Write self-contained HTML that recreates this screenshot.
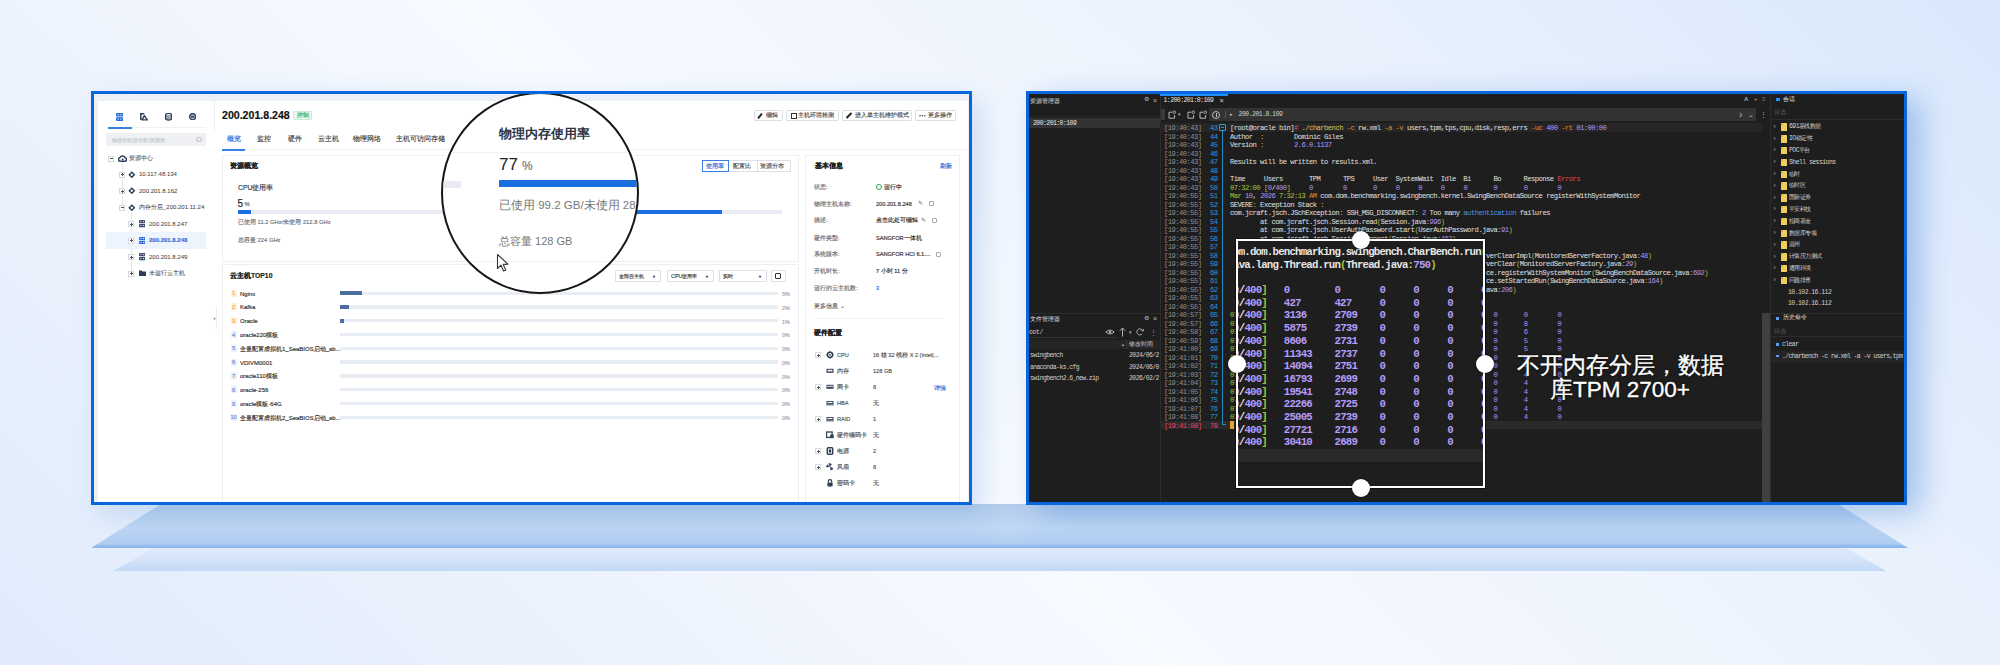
<!DOCTYPE html><html><head><meta charset="utf-8"><style>
*{margin:0;padding:0;box-sizing:border-box}
html,body{width:2000px;height:665px;overflow:hidden}
body{position:relative;font-family:"Liberation Sans",sans-serif;background:linear-gradient(43deg,#e0ebfc 0%,#edf3fd 25%,#f7faff 43%,#eef4fd 66%,#d9e8fc 100%)}
.a{position:absolute}
.t{white-space:nowrap}
.m{font-family:"Liberation Mono",monospace}
.plat1{left:91px;top:504px;width:1817px;height:44px;clip-path:polygon(70px 0,1747px 0,100% 100%,0 100%);background:linear-gradient(180deg,#b4cdec 0%,#c0d8f4 55%,#afcdf2 90%,#8ab7ec 97%,#8ab7ec 100%)}
.plat2{left:113px;top:548px;width:1773px;height:23px;clip-path:polygon(41px 0,1733px 0,100% 100%,0 100%);background:linear-gradient(180deg,#dfeafb 0%,#d2e3f9 55%,#c2d9f6 100%)}
.panel{border:3px solid #0a66dc;overflow:hidden}
#lp{left:91px;top:91px;width:881px;height:414px;background:#eceff3;box-shadow:10px 10px 26px rgba(70,130,210,.22)}
#rp{left:1026px;top:91px;width:881px;height:414px;background:#1e1e1e;box-shadow:14px 8px 28px rgba(60,125,215,.40)}
.org{position:absolute;left:0;top:0;width:2000px;height:665px}
#lp .org{left:-94px;top:-94px}
#rp .org{left:-1029px;top:-94px}
#lp .t{-webkit-text-stroke:0.16px currentColor}
#lp .mag .t{-webkit-text-stroke:0}
.btn{position:absolute;border:1px solid #dcdfe6;background:#fff;border-radius:1px}
</style></head><body>
<div class="a plat2"></div><div class="a plat1"></div>
<div class="a panel" id="lp"><div class="org">
<div class="a" style="left:98px;top:101px;width:870px;height:404px;background:#fff"></div>
<div class="a" style="left:214px;top:101px;width:1px;height:30px;background:#f0f1f3"></div>
<svg class="a" style="left:116.3px;top:113px" width="7.2" height="8" viewBox="0 0 7.2 8"><rect x="0" y="0" width="7.2" height="3.6" rx="1" fill="#2a6fdb"/><rect x="0" y="4.3" width="7.2" height="3.7" rx="1" fill="#2a6fdb"/><rect x="1.6" y="1.3" width="1.2" height="1" fill="#fff"/><rect x="4.4" y="1.3" width="1.2" height="1" fill="#fff"/><rect x="1.6" y="5.6" width="1.2" height="1" fill="#fff"/><rect x="4.4" y="5.6" width="1.2" height="1" fill="#fff"/></svg>
<svg class="a" style="left:140.3px;top:113px" width="8" height="7.6" viewBox="0 0 8 7.6"><path d="M0.8 7 V0.8 H4.3" fill="none" stroke="#2f3d58" stroke-width="1.5"/><path d="M2 6.9 L4.4 2.6 L7.3 6.9 Z" fill="none" stroke="#2f3d58" stroke-width="1.4" stroke-linejoin="round"/></svg>
<svg class="a" style="left:164.8px;top:113px" width="7.2" height="8" viewBox="0 0 7.2 8"><ellipse cx="3.6" cy="2" rx="3" ry="1.6" fill="none" stroke="#2f3d58" stroke-width="1.3"/><path d="M0.6 2 V6 Q3.6 8.2 6.6 6 V2" fill="#9aa6b8" stroke="#2f3d58" stroke-width="1.3"/></svg>
<svg class="a" style="left:189px;top:113px" width="7.4" height="7.4" viewBox="0 0 7.4 7.4"><circle cx="3.7" cy="3.7" r="3.1" fill="#9fb0c6" stroke="#2f3d58" stroke-width="1.3"/><rect x="2" y="3" width="3.4" height="1.4" fill="#2f3d58"/></svg>
<div class="a" style="left:108px;top:127px;width:98px;height:1px;background:#eef0f3"></div>
<div class="a" style="left:108px;top:126.5px;width:23.5px;height:2px;background:#3b7fe0"></div>
<div class="a" style="left:106px;top:132.5px;width:100px;height:13.5px;background:#eef0f4;border-radius:1px"></div>
<div class="a t" style="left:112px;top:137.05px;font-size:5px;line-height:6.50px;color:#c4c8cf;font-weight:400;">物理主机/云主机/资源池</div>
<div class="a" style="left:196px;top:136.5px;width:5.5px;height:5.5px;border:1px solid #b8bcc3;border-radius:50%"></div>
<div class="a" style="left:121.6px;top:162px;width:1px;height:46px;background:#e4e6ea"></div>
<div class="a" style="left:131.3px;top:212px;width:1px;height:62px;background:#e4e6ea"></div>
<div class="a" style="left:108px;top:155.5px;width:6px;height:6px;border:1px solid #d4d7dc;background:#fff"></div>
<div class="a" style="left:109.5px;top:158.0px;width:3px;height:1px;background:#555"></div>
<svg class="a" style="left:117.5px;top:155px" width="9" height="7" viewBox="0 0 9 7"><path d="M2 6.3 H7.2 A1.7 1.7 0 0 0 7.4 3 A3 3 0 0 0 1.8 2.8 A1.8 1.8 0 0 0 2 6.3 Z" fill="none" stroke="#2f3d58" stroke-width="1.5"/><circle cx="4.6" cy="4.4" r="1" fill="#2f3d58"/></svg>
<div class="a t" style="left:129px;top:155.40px;font-size:6px;line-height:7.80px;color:#444;font-weight:400;-webkit-text-stroke:0.05px currentColor">资源中心</div>
<div class="a" style="left:119px;top:171.5px;width:6px;height:6px;border:1px solid #d4d7dc;background:#fff"></div>
<div class="a" style="left:120.5px;top:174.0px;width:3px;height:1px;background:#555"></div>
<div class="a" style="left:121.5px;top:173.0px;width:1px;height:3px;background:#555"></div>
<svg class="a" style="left:128.2px;top:170.70px" width="7.6" height="7.6" viewBox="0 0 7.6 7.6"><path d="M3.8 0.3 L7.3 3.8 L3.8 7.3 L0.3 3.8 Z" fill="#2f3d58"/><path d="M3.8 2.3 L5.3 3.8 L3.8 5.3 L2.3 3.8 Z" fill="#fff"/></svg>
<div class="a t" style="left:139px;top:171.40px;font-size:6px;line-height:7.80px;color:#444;font-weight:400;-webkit-text-stroke:0.05px currentColor">10.117.48.134</div>
<div class="a" style="left:119px;top:188px;width:6px;height:6px;border:1px solid #d4d7dc;background:#fff"></div>
<div class="a" style="left:120.5px;top:190.5px;width:3px;height:1px;background:#555"></div>
<div class="a" style="left:121.5px;top:189.5px;width:1px;height:3px;background:#555"></div>
<svg class="a" style="left:128.2px;top:187.20px" width="7.6" height="7.6" viewBox="0 0 7.6 7.6"><path d="M3.8 0.3 L7.3 3.8 L3.8 7.3 L0.3 3.8 Z" fill="#2f3d58"/><path d="M3.8 2.3 L5.3 3.8 L3.8 5.3 L2.3 3.8 Z" fill="#fff"/></svg>
<div class="a t" style="left:139px;top:187.90px;font-size:6px;line-height:7.80px;color:#444;font-weight:400;-webkit-text-stroke:0.05px currentColor">200.201.8.162</div>
<div class="a" style="left:119px;top:204.5px;width:6px;height:6px;border:1px solid #d4d7dc;background:#fff"></div>
<div class="a" style="left:120.5px;top:207.0px;width:3px;height:1px;background:#555"></div>
<svg class="a" style="left:128.2px;top:203.70px" width="7.6" height="7.6" viewBox="0 0 7.6 7.6"><path d="M3.8 0.3 L7.3 3.8 L3.8 7.3 L0.3 3.8 Z" fill="#2f3d58"/><path d="M3.8 2.3 L5.3 3.8 L3.8 5.3 L2.3 3.8 Z" fill="#fff"/></svg>
<div class="a t" style="left:139px;top:204.40px;font-size:6px;line-height:7.80px;color:#444;font-weight:400;-webkit-text-stroke:0.05px currentColor">内存分层_200.201.11.24</div>
<div class="a" style="left:106px;top:232px;width:100px;height:16.5px;background:#eef4fd"></div>
<div class="a" style="left:128px;top:221px;width:6px;height:6px;border:1px solid #d4d7dc;background:#fff"></div>
<div class="a" style="left:129.5px;top:223.5px;width:3px;height:1px;background:#555"></div>
<div class="a" style="left:130.5px;top:222.5px;width:1px;height:3px;background:#555"></div>
<svg class="a" style="left:138.8px;top:220.40px" width="6.6" height="7.2" viewBox="0 0 6.6 7.2"><rect x="0" y="0" width="6.6" height="3.2" rx="0.8" fill="#3a4a66"/><rect x="0" y="3.9" width="6.6" height="3.3" rx="0.8" fill="#3a4a66"/><rect x="1.4" y="1.1" width="1.1" height="1" fill="#fff"/><rect x="4.1" y="1.1" width="1.1" height="1" fill="#fff"/><rect x="1.4" y="5.1" width="1.1" height="1" fill="#fff"/><rect x="4.1" y="5.1" width="1.1" height="1" fill="#fff"/></svg>
<div class="a t" style="left:149px;top:220.90px;font-size:6px;line-height:7.80px;color:#444;font-weight:400;-webkit-text-stroke:0.05px currentColor">200.201.8.247</div>
<div class="a" style="left:128px;top:237.5px;width:6px;height:6px;border:1px solid #d4d7dc;background:#fff"></div>
<div class="a" style="left:129.5px;top:240.0px;width:3px;height:1px;background:#555"></div>
<div class="a" style="left:130.5px;top:239.0px;width:1px;height:3px;background:#555"></div>
<svg class="a" style="left:138.8px;top:236.90px" width="6.6" height="7.2" viewBox="0 0 6.6 7.2"><rect x="0" y="0" width="6.6" height="3.2" rx="0.8" fill="#2a6fdb"/><rect x="0" y="3.9" width="6.6" height="3.3" rx="0.8" fill="#2a6fdb"/><rect x="1.4" y="1.1" width="1.1" height="1" fill="#fff"/><rect x="4.1" y="1.1" width="1.1" height="1" fill="#fff"/><rect x="1.4" y="5.1" width="1.1" height="1" fill="#fff"/><rect x="4.1" y="5.1" width="1.1" height="1" fill="#fff"/></svg>
<div class="a t" style="left:149px;top:237.40px;font-size:6px;line-height:7.80px;color:#2a6fdb;font-weight:700;">200.201.8.248</div>
<div class="a" style="left:128px;top:254px;width:6px;height:6px;border:1px solid #d4d7dc;background:#fff"></div>
<div class="a" style="left:129.5px;top:256.5px;width:3px;height:1px;background:#555"></div>
<div class="a" style="left:130.5px;top:255.5px;width:1px;height:3px;background:#555"></div>
<svg class="a" style="left:138.8px;top:253.40px" width="6.6" height="7.2" viewBox="0 0 6.6 7.2"><rect x="0" y="0" width="6.6" height="3.2" rx="0.8" fill="#3a4a66"/><rect x="0" y="3.9" width="6.6" height="3.3" rx="0.8" fill="#3a4a66"/><rect x="1.4" y="1.1" width="1.1" height="1" fill="#fff"/><rect x="4.1" y="1.1" width="1.1" height="1" fill="#fff"/><rect x="1.4" y="5.1" width="1.1" height="1" fill="#fff"/><rect x="4.1" y="5.1" width="1.1" height="1" fill="#fff"/></svg>
<div class="a t" style="left:149px;top:253.90px;font-size:6px;line-height:7.80px;color:#444;font-weight:400;-webkit-text-stroke:0.05px currentColor">200.201.8.249</div>
<div class="a" style="left:128px;top:270.5px;width:6px;height:6px;border:1px solid #d4d7dc;background:#fff"></div>
<div class="a" style="left:129.5px;top:273.0px;width:3px;height:1px;background:#555"></div>
<div class="a" style="left:130.5px;top:272.0px;width:1px;height:3px;background:#555"></div>
<svg class="a" style="left:138.8px;top:270px" width="7" height="6.4" viewBox="0 0 7 6.4"><path d="M0 0.6 H2.6 L3.4 1.4 H7 V6.4 H0 Z" fill="#2f3d58"/></svg>
<div class="a t" style="left:149px;top:270.40px;font-size:6px;line-height:7.80px;color:#444;font-weight:400;-webkit-text-stroke:0.05px currentColor">未运行云主机</div>
<div class="a" style="left:212px;top:306px;width:4px;height:24px;background:#fff;border-radius:0 3px 3px 0;box-shadow:1px 0 2px rgba(0,0,0,.08)"></div>
<div class="a t" style="left:213.5px;top:314.90px;font-size:6px;line-height:7.80px;color:#555;font-weight:400;">‹</div>
<div class="a t" style="left:222px;top:109.11px;font-size:10.6px;line-height:13.78px;color:#111;font-weight:700;">200.201.8.248</div>
<div class="a" style="left:293px;top:110.5px;width:19px;height:9px;background:#eaf8ef;border:1px solid #c8ecd6;border-radius:1px"></div>
<div class="a t" style="left:297px;top:112.22px;font-size:5.5px;line-height:7.15px;color:#3aae67;font-weight:400;">控制</div>
<div class="btn" style="left:754px;top:109.5px;width:29px;height:11.5px"></div>
<div class="btn" style="left:786px;top:109.5px;width:53px;height:11.5px"></div>
<div class="btn" style="left:842px;top:109.5px;width:70px;height:11.5px"></div>
<div class="btn" style="left:915px;top:109.5px;width:41px;height:11.5px"></div>
<div class="a t" style="left:766px;top:112.46px;font-size:5.6px;line-height:7.28px;color:#555;font-weight:400;">编辑</div>
<div class="a t" style="left:798px;top:112.46px;font-size:5.6px;line-height:7.28px;color:#555;font-weight:400;">主机环境检测</div>
<div class="a t" style="left:855px;top:112.46px;font-size:5.6px;line-height:7.28px;color:#555;font-weight:400;">进入单主机维护模式</div>
<div class="a t" style="left:928px;top:112.46px;font-size:5.6px;line-height:7.28px;color:#555;font-weight:400;">更多操作</div>
<div class="a" style="left:759px;top:112.5px;width:2px;height:6px;background:#222;transform:rotate(40deg)"></div>
<div class="a" style="left:791px;top:112.5px;width:6px;height:6px;border:1.5px solid #333"></div>
<div class="a" style="left:848px;top:112px;width:2px;height:7px;background:#222;transform:rotate(45deg)"></div>
<div class="a t" style="left:919px;top:111.25px;font-size:7px;line-height:9.10px;color:#333;font-weight:700;">···</div>
<div class="a t" style="left:227px;top:135.18px;font-size:6.8px;line-height:8.84px;color:#2a6fdb;font-weight:400;">概览</div>
<div class="a t" style="left:257px;top:135.18px;font-size:6.8px;line-height:8.84px;color:#444;font-weight:400;">监控</div>
<div class="a t" style="left:288px;top:135.18px;font-size:6.8px;line-height:8.84px;color:#444;font-weight:400;">硬件</div>
<div class="a t" style="left:318px;top:135.18px;font-size:6.8px;line-height:8.84px;color:#444;font-weight:400;">云主机</div>
<div class="a t" style="left:353px;top:135.18px;font-size:6.8px;line-height:8.84px;color:#444;font-weight:400;">物理网络</div>
<div class="a t" style="left:396px;top:135.18px;font-size:6.8px;line-height:8.84px;color:#444;font-weight:400;">主机可访问存储</div>
<div class="a" style="left:222px;top:149px;width:746px;height:1px;background:#f0f1f3"></div>
<div class="a" style="left:222px;top:148.5px;width:23px;height:2px;background:#3b7fe0"></div>
<div class="a" style="left:222px;top:155px;width:577px;height:107px;border:1px solid #eeeff2;background:#fff"></div>
<div class="a t" style="left:230px;top:162.38px;font-size:6.8px;line-height:8.84px;color:#222;font-weight:700;">资源概览</div>
<div class="a t" style="left:238px;top:183.98px;font-size:6.8px;line-height:8.84px;color:#2d3a4f;font-weight:400;">CPU使用率</div>
<div class="a t" style="left:237.5px;top:196.90px;font-size:10px;line-height:13.00px;color:#222;font-weight:400;">5</div>
<div class="a t" style="left:244.5px;top:200.83px;font-size:5.8px;line-height:7.54px;color:#666;font-weight:400;">%</div>
<div class="a" style="left:238px;top:210px;width:223px;height:4px;background:#e8ecf2"></div>
<div class="a" style="left:238px;top:210px;width:13px;height:4px;background:#1a6fe0"></div>
<div class="a t" style="left:238px;top:219.03px;font-size:5.8px;line-height:7.54px;color:#6f747c;font-weight:400;">已使用 11.2 GHz/未使用 212.8 GHz</div>
<div class="a t" style="left:238px;top:237.43px;font-size:5.8px;line-height:7.54px;color:#6f747c;font-weight:400;">总容量 224 GHz</div>
<div class="a" style="left:499px;top:210px;width:283px;height:4px;background:#e8ecf2"></div>
<div class="a" style="left:499px;top:210px;width:223px;height:4px;background:#1a6fe0"></div>
<div class="a" style="left:702px;top:160px;width:88.5px;height:11.5px;border:1px solid #dcdfe6;background:#fff"></div>
<div class="a" style="left:702px;top:160px;width:27px;height:11.5px;border:1px solid #3b7fe0;background:#fff"></div>
<div class="a" style="left:756.5px;top:160px;width:1px;height:11.5px;background:#dcdfe6"></div>
<div class="a t" style="left:706px;top:162.96px;font-size:5.6px;line-height:7.28px;color:#2a6fdb;font-weight:400;">使用率</div>
<div class="a t" style="left:733px;top:162.96px;font-size:5.6px;line-height:7.28px;color:#555;font-weight:400;">配置比</div>
<div class="a t" style="left:760px;top:162.96px;font-size:5.6px;line-height:7.28px;color:#555;font-weight:400;">资源分布</div>
<div class="a" style="left:222px;top:264px;width:577px;height:250px;border:1px solid #eeeff2;background:#fff"></div>
<div class="a t" style="left:230px;top:271.88px;font-size:6.8px;line-height:8.84px;color:#222;font-weight:700;">云主机TOP10</div>
<div class="btn" style="left:615px;top:270px;width:46px;height:12px"></div>
<div class="a t" style="left:619px;top:273.29px;font-size:5.4px;line-height:7.02px;color:#444;font-weight:400;">全部云主机</div>
<div class="a t" style="left:652px;top:274.20px;font-size:4px;line-height:5.20px;color:#333;font-weight:400;">▼</div>
<div class="btn" style="left:667px;top:270px;width:47px;height:12px"></div>
<div class="a t" style="left:671px;top:273.29px;font-size:5.4px;line-height:7.02px;color:#444;font-weight:400;">CPU使用率</div>
<div class="a t" style="left:705px;top:274.20px;font-size:4px;line-height:5.20px;color:#333;font-weight:400;">▼</div>
<div class="btn" style="left:719px;top:270px;width:48px;height:12px"></div>
<div class="a t" style="left:723px;top:273.29px;font-size:5.4px;line-height:7.02px;color:#444;font-weight:400;">实时</div>
<div class="a t" style="left:758px;top:274.20px;font-size:4px;line-height:5.20px;color:#333;font-weight:400;">▼</div>
<div class="btn" style="left:771px;top:270px;width:15px;height:12px"></div>
<div class="a" style="left:775px;top:272.5px;width:6px;height:6px;border:1.3px solid #333;border-radius:1px"></div>
<div class="a" style="left:231px;top:289.7px;width:6px;height:7px;background:#fdf1dc"></div>
<div class="a t" style="left:232px;top:290.36px;font-size:5.6px;line-height:7.28px;color:#f5a623;font-weight:400;">1</div>
<div class="a t" style="left:240px;top:290.70px;font-size:6px;line-height:7.80px;color:#333;font-weight:400;">Nginx</div>
<div class="a" style="left:340px;top:291.5px;width:438px;height:3.4px;background:#e8edf4"></div>
<div class="a" style="left:340px;top:291.4px;width:22px;height:3.6px;background:#4d6f9f"></div>
<div class="a t" style="left:782px;top:290.99px;font-size:5.4px;line-height:7.02px;color:#a0a4ab;font-weight:400;">5%</div>
<div class="a" style="left:231px;top:303.47999999999996px;width:6px;height:7px;background:#fdf1dc"></div>
<div class="a t" style="left:232px;top:304.14px;font-size:5.6px;line-height:7.28px;color:#f5a623;font-weight:400;">2</div>
<div class="a t" style="left:240px;top:304.48px;font-size:6px;line-height:7.80px;color:#333;font-weight:400;">Kafka</div>
<div class="a" style="left:340px;top:305.28px;width:438px;height:3.4px;background:#e8edf4"></div>
<div class="a" style="left:340px;top:305.17999999999995px;width:9px;height:3.6px;background:#4d6f9f"></div>
<div class="a t" style="left:782px;top:304.77px;font-size:5.4px;line-height:7.02px;color:#a0a4ab;font-weight:400;">2%</div>
<div class="a" style="left:231px;top:317.26px;width:6px;height:7px;background:#fdf1dc"></div>
<div class="a t" style="left:232px;top:317.92px;font-size:5.6px;line-height:7.28px;color:#f5a623;font-weight:400;">3</div>
<div class="a t" style="left:240px;top:318.26px;font-size:6px;line-height:7.80px;color:#333;font-weight:400;">Oracle</div>
<div class="a" style="left:340px;top:319.06px;width:438px;height:3.4px;background:#e8edf4"></div>
<div class="a" style="left:340px;top:318.96px;width:4px;height:3.6px;background:#4d6f9f"></div>
<div class="a t" style="left:782px;top:318.55px;font-size:5.4px;line-height:7.02px;color:#a0a4ab;font-weight:400;">1%</div>
<div class="a" style="left:231px;top:331.03999999999996px;width:6px;height:7px;background:#eaf0fa"></div>
<div class="a t" style="left:232px;top:331.70px;font-size:5.6px;line-height:7.28px;color:#6f8fc9;font-weight:400;">4</div>
<div class="a t" style="left:240px;top:332.04px;font-size:6px;line-height:7.80px;color:#333;font-weight:400;">oracle220模板</div>
<div class="a" style="left:340px;top:332.84px;width:438px;height:3.4px;background:#e8edf4"></div>
<div class="a t" style="left:782px;top:332.33px;font-size:5.4px;line-height:7.02px;color:#a0a4ab;font-weight:400;">0%</div>
<div class="a" style="left:231px;top:344.82px;width:6px;height:7px;background:#eaf0fa"></div>
<div class="a t" style="left:232px;top:345.48px;font-size:5.6px;line-height:7.28px;color:#6f8fc9;font-weight:400;">5</div>
<div class="a t" style="left:240px;top:345.82px;font-size:6px;line-height:7.80px;color:#333;font-weight:400;">全量配置虚拟机1_SeaBIOS启动_ab...</div>
<div class="a" style="left:340px;top:346.62px;width:438px;height:3.4px;background:#e8edf4"></div>
<div class="a t" style="left:782px;top:346.11px;font-size:5.4px;line-height:7.02px;color:#a0a4ab;font-weight:400;">0%</div>
<div class="a" style="left:231px;top:358.59999999999997px;width:6px;height:7px;background:#eaf0fa"></div>
<div class="a t" style="left:232px;top:359.26px;font-size:5.6px;line-height:7.28px;color:#6f8fc9;font-weight:400;">6</div>
<div class="a t" style="left:240px;top:359.60px;font-size:6px;line-height:7.80px;color:#333;font-weight:400;">VDIVM0001</div>
<div class="a" style="left:340px;top:360.4px;width:438px;height:3.4px;background:#e8edf4"></div>
<div class="a t" style="left:782px;top:359.89px;font-size:5.4px;line-height:7.02px;color:#a0a4ab;font-weight:400;">0%</div>
<div class="a" style="left:231px;top:372.38px;width:6px;height:7px;background:#eaf0fa"></div>
<div class="a t" style="left:232px;top:373.04px;font-size:5.6px;line-height:7.28px;color:#6f8fc9;font-weight:400;">7</div>
<div class="a t" style="left:240px;top:373.38px;font-size:6px;line-height:7.80px;color:#333;font-weight:400;">oracle110模板</div>
<div class="a" style="left:340px;top:374.18px;width:438px;height:3.4px;background:#e8edf4"></div>
<div class="a t" style="left:782px;top:373.67px;font-size:5.4px;line-height:7.02px;color:#a0a4ab;font-weight:400;">0%</div>
<div class="a" style="left:231px;top:386.15999999999997px;width:6px;height:7px;background:#eaf0fa"></div>
<div class="a t" style="left:232px;top:386.82px;font-size:5.6px;line-height:7.28px;color:#6f8fc9;font-weight:400;">8</div>
<div class="a t" style="left:240px;top:387.16px;font-size:6px;line-height:7.80px;color:#333;font-weight:400;">oracle-256</div>
<div class="a" style="left:340px;top:387.96px;width:438px;height:3.4px;background:#e8edf4"></div>
<div class="a t" style="left:782px;top:387.45px;font-size:5.4px;line-height:7.02px;color:#a0a4ab;font-weight:400;">0%</div>
<div class="a" style="left:231px;top:399.94px;width:6px;height:7px;background:#eaf0fa"></div>
<div class="a t" style="left:232px;top:400.60px;font-size:5.6px;line-height:7.28px;color:#6f8fc9;font-weight:400;">9</div>
<div class="a t" style="left:240px;top:400.94px;font-size:6px;line-height:7.80px;color:#333;font-weight:400;">oracle模板-64G</div>
<div class="a" style="left:340px;top:401.74px;width:438px;height:3.4px;background:#e8edf4"></div>
<div class="a t" style="left:782px;top:401.23px;font-size:5.4px;line-height:7.02px;color:#a0a4ab;font-weight:400;">0%</div>
<div class="a" style="left:231px;top:413.71999999999997px;width:6px;height:7px;background:#eaf0fa"></div>
<div class="a t" style="left:230.5px;top:414.38px;font-size:5.6px;line-height:7.28px;color:#6f8fc9;font-weight:400;">10</div>
<div class="a t" style="left:240px;top:414.72px;font-size:6px;line-height:7.80px;color:#333;font-weight:400;">全量配置虚拟机2_SeaBIOS启动_ab...</div>
<div class="a" style="left:340px;top:415.52px;width:438px;height:3.4px;background:#e8edf4"></div>
<div class="a t" style="left:782px;top:415.01px;font-size:5.4px;line-height:7.02px;color:#a0a4ab;font-weight:400;">0%</div>
<div class="a" style="left:805px;top:155px;width:155px;height:350px;border:1px solid #eeeff2;background:#fff"></div>
<div class="a t" style="left:815px;top:162.38px;font-size:6.8px;line-height:8.84px;color:#222;font-weight:700;">基本信息</div>
<div class="a t" style="left:940px;top:163.03px;font-size:5.8px;line-height:7.54px;color:#2a6fdb;font-weight:400;">刷新</div>
<div class="a t" style="left:814px;top:184.16px;font-size:5.6px;line-height:7.28px;color:#6a6f77;font-weight:400;">状态:</div>
<div class="a" style="left:876px;top:184px;width:6px;height:6px;border:1.5px solid #27b05a;border-radius:50%"></div>
<div class="a t" style="left:884px;top:184.16px;font-size:5.6px;line-height:7.28px;color:#333;font-weight:400;">运行中</div>
<div class="a t" style="left:814px;top:200.66px;font-size:5.6px;line-height:7.28px;color:#6a6f77;font-weight:400;">物理主机名称:</div>
<div class="a t" style="left:876px;top:200.66px;font-size:5.6px;line-height:7.28px;color:#333;font-weight:400;">200.201.8.248</div>
<div class="a t" style="left:814px;top:217.16px;font-size:5.6px;line-height:7.28px;color:#6a6f77;font-weight:400;">描述:</div>
<div class="a t" style="left:876px;top:217.16px;font-size:5.6px;line-height:7.28px;color:#333;font-weight:400;">点击此处可编辑</div>
<div class="a t" style="left:814px;top:235.16px;font-size:5.6px;line-height:7.28px;color:#6a6f77;font-weight:400;">硬件类型:</div>
<div class="a t" style="left:876px;top:235.16px;font-size:5.6px;line-height:7.28px;color:#333;font-weight:400;">SANGFOR一体机</div>
<div class="a t" style="left:814px;top:251.16px;font-size:5.6px;line-height:7.28px;color:#6a6f77;font-weight:400;">系统版本:</div>
<div class="a t" style="left:876px;top:251.16px;font-size:5.6px;line-height:7.28px;color:#333;font-weight:400;">SANGFOR HCI 6.1....</div>
<div class="a t" style="left:814px;top:268.16px;font-size:5.6px;line-height:7.28px;color:#6a6f77;font-weight:400;">开机时长:</div>
<div class="a t" style="left:876px;top:268.16px;font-size:5.6px;line-height:7.28px;color:#333;font-weight:400;">7 小时 11 分</div>
<div class="a t" style="left:814px;top:284.66px;font-size:5.6px;line-height:7.28px;color:#6a6f77;font-weight:400;">运行的云主机数:</div>
<div class="a t" style="left:876px;top:284.66px;font-size:5.6px;line-height:7.28px;color:#2a6fdb;font-weight:400;">3</div>
<div class="a t" style="left:918px;top:200.40px;font-size:6px;line-height:7.80px;color:#aaa;font-weight:400;">✎</div>
<div class="a" style="left:929px;top:201.0px;width:5px;height:5px;border:1px solid #aaa;border-radius:1px"></div>
<div class="a t" style="left:921px;top:216.90px;font-size:6px;line-height:7.80px;color:#aaa;font-weight:400;">✎</div>
<div class="a" style="left:932px;top:217.5px;width:5px;height:5px;border:1px solid #aaa;border-radius:1px"></div>
<div class="a" style="left:936px;top:251.5px;width:5px;height:5px;border:1px solid #aaa;border-radius:1px"></div>
<div class="a t" style="left:814px;top:302.66px;font-size:5.6px;line-height:7.28px;color:#666;font-weight:400;">更多信息 ⌄</div>
<div class="a" style="left:814px;top:318px;width:130px;height:1px;background:#f0f1f3"></div>
<div class="a t" style="left:814px;top:328.88px;font-size:6.8px;line-height:8.84px;color:#222;font-weight:700;">硬件配置</div>
<div class="a" style="left:815px;top:352px;width:6px;height:6px;border:1px solid #d4d7dc;background:#fff"></div>
<div class="a" style="left:816.5px;top:354.5px;width:3px;height:1px;background:#555"></div>
<div class="a" style="left:817.5px;top:353.5px;width:1px;height:3px;background:#555"></div>
<svg class="a" style="left:825.5px;top:351.20px" width="8" height="7.6" viewBox="0 0 8 7.6"><circle cx="4" cy="3.8" r="2.6" fill="none" stroke="#2f3d58" stroke-width="1.5"/><circle cx="4" cy="3.8" r="0.9" fill="#2f3d58"/><path d="M4 0.2V1.2M4 6.4V7.4M0.4 3.8H1.4M6.6 3.8H7.6" stroke="#2f3d58" stroke-width="1.2"/></svg>
<div class="a t" style="left:837px;top:352.16px;font-size:5.6px;line-height:7.28px;color:#555;font-weight:400;">CPU</div>
<div class="a t" style="left:873px;top:352.16px;font-size:5.6px;line-height:7.28px;color:#555;font-weight:400;">16 核 32 线程 X 2  (Intel(...</div>
<svg class="a" style="left:825.5px;top:367.20px" width="8" height="7.6" viewBox="0 0 8 7.6"><rect x="0.5" y="1.8" width="7" height="4" fill="#2f3d58"/><rect x="1.6" y="2.8" width="4.8" height="1.6" fill="#fff"/></svg>
<div class="a t" style="left:837px;top:368.16px;font-size:5.6px;line-height:7.28px;color:#555;font-weight:400;">内存</div>
<div class="a t" style="left:873px;top:368.16px;font-size:5.6px;line-height:7.28px;color:#555;font-weight:400;">128 GB</div>
<div class="a" style="left:815px;top:384px;width:6px;height:6px;border:1px solid #d4d7dc;background:#fff"></div>
<div class="a" style="left:816.5px;top:386.5px;width:3px;height:1px;background:#555"></div>
<div class="a" style="left:817.5px;top:385.5px;width:1px;height:3px;background:#555"></div>
<svg class="a" style="left:825.5px;top:383.20px" width="8" height="7.6" viewBox="0 0 8 7.6"><rect x="0.5" y="1.8" width="7" height="4" fill="#2f3d58"/><rect x="1.5" y="2.7" width="1.4" height="1.4" fill="#fff"/><rect x="3.4" y="2.7" width="1.4" height="1.4" fill="#fff"/><rect x="5.3" y="2.7" width="1.4" height="1.4" fill="#fff"/></svg>
<div class="a t" style="left:837px;top:384.16px;font-size:5.6px;line-height:7.28px;color:#555;font-weight:400;">网卡</div>
<div class="a t" style="left:873px;top:384.16px;font-size:5.6px;line-height:7.28px;color:#555;font-weight:400;">8</div>
<svg class="a" style="left:825.5px;top:399.20px" width="8" height="7.6" viewBox="0 0 8 7.6"><rect x="0.5" y="2" width="7" height="3.6" fill="#2f3d58"/><path d="M1 5.6V6.8M3 5.6V6.8M5 5.6V6.8M7 5.6V6.8" stroke="#2f3d58" stroke-width="0.8"/><rect x="1.5" y="2.9" width="5" height="1.2" fill="#fff"/></svg>
<div class="a t" style="left:837px;top:400.16px;font-size:5.6px;line-height:7.28px;color:#555;font-weight:400;">HBA</div>
<div class="a t" style="left:873px;top:400.16px;font-size:5.6px;line-height:7.28px;color:#555;font-weight:400;">无</div>
<div class="a" style="left:815px;top:416px;width:6px;height:6px;border:1px solid #d4d7dc;background:#fff"></div>
<div class="a" style="left:816.5px;top:418.5px;width:3px;height:1px;background:#555"></div>
<div class="a" style="left:817.5px;top:417.5px;width:1px;height:3px;background:#555"></div>
<svg class="a" style="left:825.5px;top:415.20px" width="8" height="7.6" viewBox="0 0 8 7.6"><rect x="0.5" y="2" width="7" height="3.6" fill="#2f3d58"/><path d="M1 5.6V6.8M3 5.6V6.8M5 5.6V6.8M7 5.6V6.8" stroke="#2f3d58" stroke-width="0.8"/><rect x="1.5" y="2.9" width="5" height="1.2" fill="#fff"/></svg>
<div class="a t" style="left:837px;top:416.16px;font-size:5.6px;line-height:7.28px;color:#555;font-weight:400;">RAID</div>
<div class="a t" style="left:873px;top:416.16px;font-size:5.6px;line-height:7.28px;color:#555;font-weight:400;">1</div>
<svg class="a" style="left:825.5px;top:431.20px" width="8" height="7.6" viewBox="0 0 8 7.6"><rect x="0.5" y="1" width="5.6" height="5.4" fill="none" stroke="#2f3d58" stroke-width="1.3"/><rect x="4.2" y="3.6" width="3.5" height="3.5" fill="#2f3d58"/></svg>
<div class="a t" style="left:837px;top:432.16px;font-size:5.6px;line-height:7.28px;color:#555;font-weight:400;">硬件编码卡</div>
<div class="a t" style="left:873px;top:432.16px;font-size:5.6px;line-height:7.28px;color:#555;font-weight:400;">无</div>
<div class="a" style="left:815px;top:448px;width:6px;height:6px;border:1px solid #d4d7dc;background:#fff"></div>
<div class="a" style="left:816.5px;top:450.5px;width:3px;height:1px;background:#555"></div>
<div class="a" style="left:817.5px;top:449.5px;width:1px;height:3px;background:#555"></div>
<svg class="a" style="left:825.5px;top:447.20px" width="8" height="7.6" viewBox="0 0 8 7.6"><rect x="1.3" y="0.8" width="5.4" height="6.4" rx="0.8" fill="none" stroke="#2f3d58" stroke-width="1.4"/><rect x="2.8" y="2.4" width="2.4" height="3.2" fill="#2f3d58"/></svg>
<div class="a t" style="left:837px;top:448.16px;font-size:5.6px;line-height:7.28px;color:#555;font-weight:400;">电源</div>
<div class="a t" style="left:873px;top:448.16px;font-size:5.6px;line-height:7.28px;color:#555;font-weight:400;">2</div>
<div class="a" style="left:815px;top:464px;width:6px;height:6px;border:1px solid #d4d7dc;background:#fff"></div>
<div class="a" style="left:816.5px;top:466.5px;width:3px;height:1px;background:#555"></div>
<div class="a" style="left:817.5px;top:465.5px;width:1px;height:3px;background:#555"></div>
<svg class="a" style="left:825.5px;top:463.20px" width="8" height="7.6" viewBox="0 0 8 7.6"><path d="M4 3.8 L2.2 0.6 A3 3 0 0 1 5.8 1.2 Z M4 3.8 L7.4 5.2 A3 3 0 0 1 4.6 7.4 Z M4 3.8 L0.6 4.6 A3 3 0 0 1 1.2 1.4 Z" fill="#2f3d58"/></svg>
<div class="a t" style="left:837px;top:464.16px;font-size:5.6px;line-height:7.28px;color:#555;font-weight:400;">风扇</div>
<div class="a t" style="left:873px;top:464.16px;font-size:5.6px;line-height:7.28px;color:#555;font-weight:400;">8</div>
<svg class="a" style="left:825.5px;top:479.20px" width="8" height="7.6" viewBox="0 0 8 7.6"><path d="M2.3 3.4V2.3A1.7 1.7 0 0 1 5.7 2.3V3.4" fill="none" stroke="#2f3d58" stroke-width="1.2"/><rect x="1.4" y="3.4" width="5.2" height="4" rx="0.6" fill="#2f3d58"/></svg>
<div class="a t" style="left:837px;top:480.16px;font-size:5.6px;line-height:7.28px;color:#555;font-weight:400;">密码卡</div>
<div class="a t" style="left:873px;top:480.16px;font-size:5.6px;line-height:7.28px;color:#555;font-weight:400;">无</div>
<div class="a t" style="left:934px;top:385.16px;font-size:5.6px;line-height:7.28px;color:#2a6fdb;font-weight:400;">详情</div>
<div class="a mag" style="left:441.4px;top:91.8px;width:198px;height:202.4px;border-radius:50%;overflow:hidden;background:#fff;border:2px solid #161616">
<div class="a" style="left:-443.4px;top:-93.8px;width:1000px;height:400px">
<div class="a" style="left:430px;top:152px;width:250px;height:1px;background:#f0f1f3"></div>
<div class="a" style="left:430px;top:261px;width:250px;height:1px;background:#f0f1f3"></div>
<div class="a" style="left:440px;top:180.5px;width:21px;height:7.5px;background:#e8ecf2"></div>
<div class="a t" style="left:499px;top:126.17px;font-size:12.5px;line-height:16.25px;color:#2b3547;font-weight:700;">物理内存使用率</div>
<div class="a t" style="left:499px;top:154.25px;font-size:17px;line-height:22.10px;color:#222;font-weight:400;">77</div>
<div class="a t" style="left:522px;top:159.00px;font-size:12px;line-height:15.60px;color:#555;font-weight:400;">%</div>
<div class="a" style="left:499px;top:180px;width:200px;height:7px;background:#1a6fe0"></div>
<div class="a t" style="left:499px;top:197.83px;font-size:11.5px;line-height:14.95px;color:#777;font-weight:400;">已使用 99.2 GB/未使用 28</div>
<div class="a t" style="left:499px;top:234.15px;font-size:11px;line-height:14.30px;color:#777;font-weight:400;">总容量 128 GB</div>
</div></div>
<svg class="a" style="left:496px;top:253px" width="14" height="20" viewBox="0 0 14 20"><path d="M1.5 1.5 L1.5 15.5 L5 12.2 L7.6 18 L9.8 17 L7.2 11.4 L12 11.2 Z" fill="#fff" stroke="#333" stroke-width="1.1" stroke-linejoin="round"/></svg>
</div></div>
<div class="a panel" id="rp"><div class="org">
<div class="a" style="left:1029px;top:94px;width:131px;height:411px;background:#1e1e1e"></div>
<div class="a t" style="left:1030px;top:97.66px;font-size:5.6px;line-height:7.28px;color:#e6e6e6;font-weight:400;">资源管理器</div>
<div class="a t" style="left:1144px;top:96.40px;font-size:6px;line-height:7.80px;color:#bbb;font-weight:400;">⚙</div>
<div class="a t" style="left:1153px;top:95.75px;font-size:7px;line-height:9.10px;color:#bbb;font-weight:400;">×</div>
<div class="a" style="left:1029px;top:116px;width:131px;height:1px;background:#2a2a2a"></div>
<div class="a" style="left:1029px;top:118.2px;width:131px;height:9.5px;background:#333333"></div>
<div class="a t" style="left:1033px;top:119.84px;font-size:6.4px;line-height:8.32px;color:#e6e6e6;font-weight:400;font-family:Liberation Mono,monospace;letter-spacing:-0.51px">200:201:0:109</div>
<div class="a" style="left:1029px;top:312.5px;width:131px;height:1px;background:#2c2c2c"></div>
<div class="a t" style="left:1030px;top:316.10px;font-size:6px;line-height:7.80px;color:#e6e6e6;font-weight:400;">文件管理器</div>
<div class="a t" style="left:1144px;top:315.10px;font-size:6px;line-height:7.80px;color:#bbb;font-weight:400;">⚙</div>
<div class="a t" style="left:1153px;top:314.45px;font-size:7px;line-height:9.10px;color:#bbb;font-weight:400;">×</div>
<div class="a t" style="left:1029px;top:328.64px;font-size:6.4px;line-height:8.32px;color:#cfcfcf;font-weight:400;font-family:Liberation Mono,monospace;letter-spacing:-0.3px">oot/</div>
<div class="a" style="left:1029px;top:336.5px;width:88px;height:1px;background:#333"></div>
<svg class="a" style="left:1105px;top:329px" width="10" height="6" viewBox="0 0 10 6"><path d="M0.8 3 Q5 -1 9.2 3 Q5 7 0.8 3 Z" fill="none" stroke="#b0b0b0" stroke-width="1"/><circle cx="5" cy="3" r="1.3" fill="#b0b0b0"/></svg>
<svg class="a" style="left:1119px;top:327px" width="7" height="10" viewBox="0 0 7 10"><path d="M3.5 9.5 V1 M0.8 3.8 L3.5 1 L6.2 3.8" fill="none" stroke="#b0b0b0" stroke-width="1"/></svg>
<div class="a t" style="left:1128.5px;top:329.25px;font-size:5px;line-height:6.50px;color:#aaa;font-weight:400;">▾</div>
<svg class="a" style="left:1135.5px;top:328px" width="8" height="8" viewBox="0 0 8 8"><path d="M6.8 3.2 A3 3 0 1 0 6 6" fill="none" stroke="#b0b0b0" stroke-width="1"/><path d="M5.2 1.8 L7 3.4 L7.6 1" fill="none" stroke="#b0b0b0" stroke-width="0.9"/></svg>
<div class="a t" style="left:1150px;top:327.95px;font-size:7px;line-height:9.10px;color:#aaa;font-weight:400;">⋮</div>
<div class="a" style="left:1029px;top:340px;width:131px;height:8.7px;background:#262626"></div>
<div class="a t" style="left:1121px;top:341.90px;font-size:4px;line-height:5.20px;color:#aaa;font-weight:400;">▲</div>
<div class="a" style="left:1126px;top:340px;width:1px;height:8.7px;background:#3a3a3a"></div>
<div class="a t" style="left:1129px;top:340.86px;font-size:5.6px;line-height:7.28px;color:#cfcfcf;font-weight:400;">修改时间</div>
<div class="a t" style="left:1030px;top:352.14px;font-size:6.4px;line-height:8.32px;color:#d0d0d0;font-weight:400;font-family:Liberation Mono,monospace;letter-spacing:-0.57px">swingbench</div>
<div class="a t" style="left:1129px;top:352.14px;font-size:6.4px;line-height:8.32px;color:#d0d0d0;font-weight:400;font-family:Liberation Mono,monospace;letter-spacing:-0.51px">2024/06/2</div>
<div class="a t" style="left:1030px;top:363.64px;font-size:6.4px;line-height:8.32px;color:#d0d0d0;font-weight:400;font-family:Liberation Mono,monospace;letter-spacing:-0.57px">anaconda-ks.cfg</div>
<div class="a t" style="left:1129px;top:363.64px;font-size:6.4px;line-height:8.32px;color:#d0d0d0;font-weight:400;font-family:Liberation Mono,monospace;letter-spacing:-0.51px">2024/06/0</div>
<div class="a t" style="left:1030px;top:374.94px;font-size:6.4px;line-height:8.32px;color:#d0d0d0;font-weight:400;font-family:Liberation Mono,monospace;letter-spacing:-0.57px">swingbench2.6_new.zip</div>
<div class="a t" style="left:1129px;top:374.94px;font-size:6.4px;line-height:8.32px;color:#d0d0d0;font-weight:400;font-family:Liberation Mono,monospace;letter-spacing:-0.51px">2026/02/2</div>
<div class="a" style="left:1159.5px;top:94px;width:1.5px;height:411px;background:#2d2d2d"></div>
<div class="a" style="left:1769.5px;top:94px;width:1.5px;height:411px;background:#2d2d2d"></div>
<div class="a" style="left:1160px;top:94px;width:68px;height:1.5px;background:#1e8fff"></div>
<div class="a t" style="left:1163.5px;top:97.14px;font-size:6.4px;line-height:8.32px;color:#e8e8e8;font-weight:400;font-family:Liberation Mono,monospace;letter-spacing:-0.51px">1:200:201:0:109</div>
<div class="a t" style="left:1219.5px;top:95.72px;font-size:7.5px;line-height:9.75px;color:#ddd;font-weight:400;">×</div>
<div class="a t" style="left:1744px;top:96.40px;font-size:6px;line-height:7.80px;color:#aaa;font-weight:700;">A</div>
<div class="a t" style="left:1754px;top:96.40px;font-size:6px;line-height:7.80px;color:#aaa;font-weight:400;">+</div>
<div class="a t" style="left:1762px;top:96.40px;font-size:6px;line-height:7.80px;color:#888;font-weight:400;">≡</div>
<div class="a" style="left:1161px;top:109px;width:4px;height:11px;background:#3a3a3a"></div>
<svg class="a" style="left:1168px;top:110px" width="8" height="9" viewBox="0 0 8 9"><path d="M4.2 2.2 H1 V8.2 H6.6 V5" fill="none" stroke="#b8b8b8" stroke-width="1"/><circle cx="6.3" cy="2.2" r="1.3" fill="none" stroke="#b8b8b8" stroke-width="0.9"/></svg>
<svg class="a" style="left:1187px;top:110px" width="8" height="9" viewBox="0 0 8 9"><path d="M4.2 2.2 H1 V8.2 H6.6 V5" fill="none" stroke="#b8b8b8" stroke-width="1"/><circle cx="6.3" cy="2.2" r="1.3" fill="none" stroke="#b8b8b8" stroke-width="0.9"/></svg>
<svg class="a" style="left:1199px;top:110px" width="8" height="9" viewBox="0 0 8 9"><path d="M4.2 2.2 H1 V8.2 H6.6 V5" fill="none" stroke="#b8b8b8" stroke-width="1"/><circle cx="6.3" cy="2.2" r="1.3" fill="none" stroke="#b8b8b8" stroke-width="0.9"/></svg>
<div class="a t" style="left:1178px;top:111.25px;font-size:5px;line-height:6.50px;color:#aaa;font-weight:400;">▾</div>
<div class="a" style="left:1209px;top:108px;width:547px;height:12.5px;background:#333"></div>
<div class="a" style="left:1212px;top:110.5px;width:8px;height:8px;border:1px solid #bbb;border-radius:50%"></div>
<div class="a" style="left:1215.5px;top:112.5px;width:1px;height:4px;background:#bbb"></div>
<div class="a" style="left:1224.5px;top:111px;width:0.8px;height:7px;background:#555"></div>
<div class="a t" style="left:1230px;top:111.25px;font-size:5px;line-height:6.50px;color:#ccc;font-weight:400;">▸</div>
<div class="a t" style="left:1238.5px;top:111.14px;font-size:6.4px;line-height:8.32px;color:#d0d0d0;font-weight:400;font-family:Liberation Mono,monospace;letter-spacing:-0.45px">200.201.8.109</div>
<div class="a t" style="left:1739px;top:108.00px;font-size:10px;line-height:13.00px;color:#bbb;font-weight:400;">›</div>
<div class="a t" style="left:1748px;top:109.65px;font-size:7px;line-height:9.10px;color:#bbb;font-weight:400;">⌄</div>
<div class="a t" style="left:1760px;top:109.95px;font-size:7px;line-height:9.10px;color:#bbb;font-weight:400;">⋮</div>
<div class="a" style="left:1761.5px;top:313px;width:8px;height:192px;background:#404040"></div>
<div class="a" style="left:1776px;top:97.5px;width:3.5px;height:3.5px;background:#1e8fff"></div>
<div class="a t" style="left:1783px;top:95.70px;font-size:6px;line-height:7.80px;color:#e6e6e6;font-weight:400;">会话</div>
<div class="a t" style="left:1774px;top:109.42px;font-size:5.5px;line-height:7.15px;color:#555;font-weight:400;">筛选</div>
<div class="a" style="left:1771px;top:118.5px;width:133px;height:1px;background:#2c2c2c"></div>
<div class="a t" style="left:1773.5px;top:122.88px;font-size:6.5px;line-height:8.45px;color:#aaa;font-weight:400;">›</div>
<div class="a" style="left:1780.5px;top:123.3px;width:6px;height:7.6px;background:#efcf5c;border-radius:0.5px"></div>
<div class="a" style="left:1780.5px;top:123.3px;width:2.5px;height:2px;background:#d8b040"></div>
<div class="a t" style="left:1789px;top:123.44px;font-size:6.4px;line-height:8.32px;color:#d8d8d8;font-weight:400;font-family:Liberation Mono,monospace;letter-spacing:-0.51px">691基线数据</div>
<div class="a t" style="left:1773.5px;top:134.68px;font-size:6.5px;line-height:8.45px;color:#aaa;font-weight:400;">›</div>
<div class="a" style="left:1780.5px;top:135.1px;width:6px;height:7.6px;background:#efcf5c;border-radius:0.5px"></div>
<div class="a" style="left:1780.5px;top:135.1px;width:2.5px;height:2px;background:#d8b040"></div>
<div class="a t" style="left:1789px;top:135.24px;font-size:6.4px;line-height:8.32px;color:#d8d8d8;font-weight:400;font-family:Liberation Mono,monospace;letter-spacing:-0.51px">IO稳定性</div>
<div class="a t" style="left:1773.5px;top:146.47px;font-size:6.5px;line-height:8.45px;color:#aaa;font-weight:400;">›</div>
<div class="a" style="left:1780.5px;top:146.89999999999998px;width:6px;height:7.6px;background:#efcf5c;border-radius:0.5px"></div>
<div class="a" style="left:1780.5px;top:146.89999999999998px;width:2.5px;height:2px;background:#d8b040"></div>
<div class="a t" style="left:1789px;top:147.04px;font-size:6.4px;line-height:8.32px;color:#d8d8d8;font-weight:400;font-family:Liberation Mono,monospace;letter-spacing:-0.51px">POC平台</div>
<div class="a t" style="left:1773.5px;top:158.28px;font-size:6.5px;line-height:8.45px;color:#aaa;font-weight:400;">›</div>
<div class="a" style="left:1780.5px;top:158.7px;width:6px;height:7.6px;background:#efcf5c;border-radius:0.5px"></div>
<div class="a" style="left:1780.5px;top:158.7px;width:2.5px;height:2px;background:#d8b040"></div>
<div class="a t" style="left:1789px;top:158.84px;font-size:6.4px;line-height:8.32px;color:#d8d8d8;font-weight:400;font-family:Liberation Mono,monospace;letter-spacing:-0.51px">Shell sessions</div>
<div class="a t" style="left:1773.5px;top:170.08px;font-size:6.5px;line-height:8.45px;color:#aaa;font-weight:400;">›</div>
<div class="a" style="left:1780.5px;top:170.5px;width:6px;height:7.6px;background:#efcf5c;border-radius:0.5px"></div>
<div class="a" style="left:1780.5px;top:170.5px;width:2.5px;height:2px;background:#d8b040"></div>
<div class="a t" style="left:1789px;top:170.64px;font-size:6.4px;line-height:8.32px;color:#d8d8d8;font-weight:400;font-family:Liberation Mono,monospace;letter-spacing:-0.51px">临时</div>
<div class="a t" style="left:1773.5px;top:181.88px;font-size:6.5px;line-height:8.45px;color:#aaa;font-weight:400;">›</div>
<div class="a" style="left:1780.5px;top:182.29999999999998px;width:6px;height:7.6px;background:#efcf5c;border-radius:0.5px"></div>
<div class="a" style="left:1780.5px;top:182.29999999999998px;width:2.5px;height:2px;background:#d8b040"></div>
<div class="a t" style="left:1789px;top:182.44px;font-size:6.4px;line-height:8.32px;color:#d8d8d8;font-weight:400;font-family:Liberation Mono,monospace;letter-spacing:-0.51px">临时区</div>
<div class="a t" style="left:1773.5px;top:193.68px;font-size:6.5px;line-height:8.45px;color:#aaa;font-weight:400;">›</div>
<div class="a" style="left:1780.5px;top:194.1px;width:6px;height:7.6px;background:#efcf5c;border-radius:0.5px"></div>
<div class="a" style="left:1780.5px;top:194.1px;width:2.5px;height:2px;background:#d8b040"></div>
<div class="a t" style="left:1789px;top:194.24px;font-size:6.4px;line-height:8.32px;color:#d8d8d8;font-weight:400;font-family:Liberation Mono,monospace;letter-spacing:-0.51px">国新证券</div>
<div class="a t" style="left:1773.5px;top:205.47px;font-size:6.5px;line-height:8.45px;color:#aaa;font-weight:400;">›</div>
<div class="a" style="left:1780.5px;top:205.89999999999998px;width:6px;height:7.6px;background:#efcf5c;border-radius:0.5px"></div>
<div class="a" style="left:1780.5px;top:205.89999999999998px;width:2.5px;height:2px;background:#d8b040"></div>
<div class="a t" style="left:1789px;top:206.04px;font-size:6.4px;line-height:8.32px;color:#d8d8d8;font-weight:400;font-family:Liberation Mono,monospace;letter-spacing:-0.51px">平安科技</div>
<div class="a t" style="left:1773.5px;top:217.28px;font-size:6.5px;line-height:8.45px;color:#aaa;font-weight:400;">›</div>
<div class="a" style="left:1780.5px;top:217.7px;width:6px;height:7.6px;background:#efcf5c;border-radius:0.5px"></div>
<div class="a" style="left:1780.5px;top:217.7px;width:2.5px;height:2px;background:#d8b040"></div>
<div class="a t" style="left:1789px;top:217.84px;font-size:6.4px;line-height:8.32px;color:#d8d8d8;font-weight:400;font-family:Liberation Mono,monospace;letter-spacing:-0.51px">招商基金</div>
<div class="a t" style="left:1773.5px;top:229.08px;font-size:6.5px;line-height:8.45px;color:#aaa;font-weight:400;">›</div>
<div class="a" style="left:1780.5px;top:229.5px;width:6px;height:7.6px;background:#efcf5c;border-radius:0.5px"></div>
<div class="a" style="left:1780.5px;top:229.5px;width:2.5px;height:2px;background:#d8b040"></div>
<div class="a t" style="left:1789px;top:229.64px;font-size:6.4px;line-height:8.32px;color:#d8d8d8;font-weight:400;font-family:Liberation Mono,monospace;letter-spacing:-0.51px">数据库专项</div>
<div class="a t" style="left:1773.5px;top:240.88px;font-size:6.5px;line-height:8.45px;color:#aaa;font-weight:400;">›</div>
<div class="a" style="left:1780.5px;top:241.29999999999998px;width:6px;height:7.6px;background:#efcf5c;border-radius:0.5px"></div>
<div class="a" style="left:1780.5px;top:241.29999999999998px;width:2.5px;height:2px;background:#d8b040"></div>
<div class="a t" style="left:1789px;top:241.44px;font-size:6.4px;line-height:8.32px;color:#d8d8d8;font-weight:400;font-family:Liberation Mono,monospace;letter-spacing:-0.51px">温州</div>
<div class="a t" style="left:1773.5px;top:252.67px;font-size:6.5px;line-height:8.45px;color:#aaa;font-weight:400;">›</div>
<div class="a" style="left:1780.5px;top:253.09999999999997px;width:6px;height:7.6px;background:#efcf5c;border-radius:0.5px"></div>
<div class="a" style="left:1780.5px;top:253.09999999999997px;width:2.5px;height:2px;background:#d8b040"></div>
<div class="a t" style="left:1789px;top:253.24px;font-size:6.4px;line-height:8.32px;color:#d8d8d8;font-weight:400;font-family:Liberation Mono,monospace;letter-spacing:-0.51px">计算压力测试</div>
<div class="a t" style="left:1773.5px;top:264.48px;font-size:6.5px;line-height:8.45px;color:#aaa;font-weight:400;">›</div>
<div class="a" style="left:1780.5px;top:264.90000000000003px;width:6px;height:7.6px;background:#efcf5c;border-radius:0.5px"></div>
<div class="a" style="left:1780.5px;top:264.90000000000003px;width:2.5px;height:2px;background:#d8b040"></div>
<div class="a t" style="left:1789px;top:265.04px;font-size:6.4px;line-height:8.32px;color:#d8d8d8;font-weight:400;font-family:Liberation Mono,monospace;letter-spacing:-0.51px">通用环境</div>
<div class="a t" style="left:1773.5px;top:276.27px;font-size:6.5px;line-height:8.45px;color:#aaa;font-weight:400;">›</div>
<div class="a" style="left:1780.5px;top:276.7px;width:6px;height:7.6px;background:#efcf5c;border-radius:0.5px"></div>
<div class="a" style="left:1780.5px;top:276.7px;width:2.5px;height:2px;background:#d8b040"></div>
<div class="a t" style="left:1789px;top:276.84px;font-size:6.4px;line-height:8.32px;color:#d8d8d8;font-weight:400;font-family:Liberation Mono,monospace;letter-spacing:-0.51px">问题排查</div>
<div class="a t" style="left:1788px;top:288.64px;font-size:6.4px;line-height:8.32px;color:#d0d0d0;font-weight:400;font-family:Liberation Mono,monospace;letter-spacing:-0.51px">10.102.16.112</div>
<div class="a t" style="left:1788px;top:300.44px;font-size:6.4px;line-height:8.32px;color:#d0d0d0;font-weight:400;font-family:Liberation Mono,monospace;letter-spacing:-0.51px">10.102.16.112</div>
<div class="a" style="left:1771px;top:312.5px;width:133px;height:1px;background:#2c2c2c"></div>
<div class="a" style="left:1776px;top:316.5px;width:3px;height:3px;background:#5aa0f0"></div>
<div class="a t" style="left:1783px;top:314.10px;font-size:6px;line-height:7.80px;color:#e6e6e6;font-weight:400;">历史命令</div>
<div class="a t" style="left:1774px;top:327.62px;font-size:5.5px;line-height:7.15px;color:#555;font-weight:400;">筛选</div>
<div class="a" style="left:1771px;top:336px;width:133px;height:1px;background:#2c2c2c"></div>
<div class="a" style="left:1776px;top:343px;width:2.5px;height:2.5px;background:#5aa0f0"></div>
<div class="a t" style="left:1782px;top:341.14px;font-size:6.4px;line-height:8.32px;color:#d0d0d0;font-weight:400;font-family:Liberation Mono,monospace;letter-spacing:-0.55px">clear</div>
<div class="a" style="left:1771px;top:350.5px;width:133px;height:11.5px;background:#252525"></div>
<div class="a" style="left:1776px;top:354.8px;width:2.5px;height:2.5px;background:#5aa0f0"></div>
<div class="a t" style="left:1782px;top:352.84px;font-size:6.4px;line-height:8.32px;color:#d0d0d0;font-weight:400;font-family:Liberation Mono,monospace;letter-spacing:-0.58px">./charbench -c rw.xml -a -v users,tpm</div>
<div class="a" style="left:1160px;top:122.8px;width:602px;height:9px;background:#262626"></div>
<div class="a" style="left:1160px;top:420.8px;width:602px;height:8px;background:#2a2a2a"></div>
<div class="a t m" style="left:1164px;top:124.15px;font-size:7.2px;letter-spacing:-0.550px;line-height:8.5px;"><span style="color:#8e8e8e">[19:40:43]</span></div>
<div class="a t m" style="left:1210px;top:124.15px;font-size:7.2px;letter-spacing:-0.550px;line-height:8.5px;"><span style="color:#2e9bd6">43</span></div>
<div class="a t m" style="left:1230.0px;top:124.15px;font-size:7.2px;letter-spacing:-0.550px;line-height:8.5px;"><span style="color:#e0e0e0">[root@oracle&#160;bin]</span><span style="color:#f03e6a">#</span><span style="color:#d9c15a">&#160;./charbench&#160;</span><span style="color:#e38b2c">-c</span><span style="color:#e0e0e0">&#160;rw.xml&#160;</span><span style="color:#e38b2c">-a</span><span style="color:#e0e0e0">&#160;</span><span style="color:#e38b2c">-v</span><span style="color:#e0e0e0">&#160;users,tpm,tps,cpu,disk,resp,errs&#160;</span><span style="color:#e38b2c">-uc</span><span style="color:#e0e0e0">&#160;</span><span style="color:#b096f5">400</span><span style="color:#e0e0e0">&#160;</span><span style="color:#e38b2c">-rt</span><span style="color:#e0e0e0">&#160;</span><span style="color:#b096f5">01:00:00</span></div>
<div class="a t m" style="left:1164px;top:132.65px;font-size:7.2px;letter-spacing:-0.550px;line-height:8.5px;"><span style="color:#8e8e8e">[19:40:43]</span></div>
<div class="a t m" style="left:1210px;top:132.65px;font-size:7.2px;letter-spacing:-0.550px;line-height:8.5px;"><span style="color:#2e9bd6">44</span></div>
<div class="a t m" style="left:1230.0px;top:132.65px;font-size:7.2px;letter-spacing:-0.550px;line-height:8.5px;"><span style="color:#e0e0e0">Author&#160;&#160;</span><span style="color:#d9c15a">:</span><span style="color:#e0e0e0">&#160;&#160;&#160;&#160;&#160;&#160;&#160;&#160;</span><span style="color:#e0e0e0">Dominic&#160;Giles</span></div>
<div class="a t m" style="left:1164px;top:141.15px;font-size:7.2px;letter-spacing:-0.550px;line-height:8.5px;"><span style="color:#8e8e8e">[19:40:43]</span></div>
<div class="a t m" style="left:1210px;top:141.15px;font-size:7.2px;letter-spacing:-0.550px;line-height:8.5px;"><span style="color:#2e9bd6">45</span></div>
<div class="a t m" style="left:1230.0px;top:141.15px;font-size:7.2px;letter-spacing:-0.550px;line-height:8.5px;"><span style="color:#e0e0e0">Version&#160;</span><span style="color:#d9c15a">:</span><span style="color:#e0e0e0">&#160;&#160;&#160;&#160;&#160;&#160;&#160;&#160;</span><span style="color:#b096f5">2.6.0.1137</span></div>
<div class="a t m" style="left:1164px;top:149.65px;font-size:7.2px;letter-spacing:-0.550px;line-height:8.5px;"><span style="color:#8e8e8e">[19:40:43]</span></div>
<div class="a t m" style="left:1210px;top:149.65px;font-size:7.2px;letter-spacing:-0.550px;line-height:8.5px;"><span style="color:#2e9bd6">46</span></div>
<div class="a t m" style="left:1164px;top:158.15px;font-size:7.2px;letter-spacing:-0.550px;line-height:8.5px;"><span style="color:#8e8e8e">[19:40:43]</span></div>
<div class="a t m" style="left:1210px;top:158.15px;font-size:7.2px;letter-spacing:-0.550px;line-height:8.5px;"><span style="color:#2e9bd6">47</span></div>
<div class="a t m" style="left:1230.0px;top:158.15px;font-size:7.2px;letter-spacing:-0.550px;line-height:8.5px;"><span style="color:#e0e0e0">Results&#160;will&#160;be&#160;written&#160;to&#160;results.xml.</span></div>
<div class="a t m" style="left:1164px;top:166.65px;font-size:7.2px;letter-spacing:-0.550px;line-height:8.5px;"><span style="color:#8e8e8e">[19:40:43]</span></div>
<div class="a t m" style="left:1210px;top:166.65px;font-size:7.2px;letter-spacing:-0.550px;line-height:8.5px;"><span style="color:#2e9bd6">48</span></div>
<div class="a t m" style="left:1164px;top:175.15px;font-size:7.2px;letter-spacing:-0.550px;line-height:8.5px;"><span style="color:#8e8e8e">[19:40:43]</span></div>
<div class="a t m" style="left:1210px;top:175.15px;font-size:7.2px;letter-spacing:-0.550px;line-height:8.5px;"><span style="color:#2e9bd6">49</span></div>
<div class="a t m" style="left:1230.0px;top:175.15px;font-size:7.2px;letter-spacing:-0.550px;line-height:8.5px;"><span style="color:#e0e0e0">Time&#160;&#160;&#160;&#160;&#160;Users&#160;&#160;&#160;&#160;&#160;&#160;&#160;TPM&#160;&#160;&#160;&#160;&#160;&#160;TPS&#160;&#160;&#160;&#160;&#160;User&#160;&#160;SystemWait&#160;&#160;Idle&#160;&#160;Bi&#160;&#160;&#160;&#160;&#160;&#160;Bo&#160;&#160;&#160;&#160;&#160;&#160;Response&#160;</span><span style="color:#e5484d">Errors</span></div>
<div class="a t m" style="left:1164px;top:183.65px;font-size:7.2px;letter-spacing:-0.550px;line-height:8.5px;"><span style="color:#8e8e8e">[19:40:43]</span></div>
<div class="a t m" style="left:1210px;top:183.65px;font-size:7.2px;letter-spacing:-0.550px;line-height:8.5px;"><span style="color:#2e9bd6">50</span></div>
<div class="a t m" style="left:1230.0px;top:183.65px;font-size:7.2px;letter-spacing:-0.550px;line-height:8.5px;"><span style="color:#a4c43a">07:32:00</span><span style="color:#e0e0e0">&#160;</span><span style="color:#a4c43a">[</span><span style="color:#b096f5">0</span><span style="color:#e0e0e0">/</span><span style="color:#b096f5">400</span><span style="color:#a4c43a">]</span><span style="color:#e0e0e0">&#160;&#160;&#160;&#160;&#160;</span><span style="color:#b096f5">0</span><span style="color:#e0e0e0">&#160;&#160;&#160;&#160;&#160;&#160;&#160;&#160;</span><span style="color:#b096f5">0</span><span style="color:#e0e0e0">&#160;&#160;&#160;&#160;&#160;&#160;&#160;</span><span style="color:#b096f5">0</span><span style="color:#e0e0e0">&#160;&#160;&#160;&#160;&#160;</span><span style="color:#b096f5">0</span><span style="color:#e0e0e0">&#160;&#160;&#160;&#160;&#160;</span><span style="color:#b096f5">0</span><span style="color:#e0e0e0">&#160;&#160;&#160;&#160;&#160;</span><span style="color:#b096f5">0</span><span style="color:#e0e0e0">&#160;&#160;&#160;&#160;&#160;</span><span style="color:#b096f5">0</span><span style="color:#e0e0e0">&#160;&#160;&#160;&#160;&#160;&#160;&#160;</span><span style="color:#b096f5">0</span><span style="color:#e0e0e0">&#160;&#160;&#160;&#160;&#160;&#160;&#160;</span><span style="color:#b096f5">0</span><span style="color:#e0e0e0">&#160;&#160;&#160;&#160;&#160;&#160;&#160;&#160;</span><span style="color:#b096f5">0</span></div>
<div class="a t m" style="left:1164px;top:192.15px;font-size:7.2px;letter-spacing:-0.550px;line-height:8.5px;"><span style="color:#8e8e8e">[19:40:55]</span></div>
<div class="a t m" style="left:1210px;top:192.15px;font-size:7.2px;letter-spacing:-0.550px;line-height:8.5px;"><span style="color:#2e9bd6">51</span></div>
<div class="a t m" style="left:1230.0px;top:192.15px;font-size:7.2px;letter-spacing:-0.550px;line-height:8.5px;"><span style="color:#a4c43a">Mar</span><span style="color:#e0e0e0">&#160;</span><span style="color:#b096f5">10</span><span style="color:#e0e0e0">,&#160;</span><span style="color:#b096f5">2026</span><span style="color:#e0e0e0">&#160;</span><span style="color:#a4c43a">7:32:13</span><span style="color:#e0e0e0">&#160;</span><span style="color:#e38b2c">AM</span><span style="color:#e0e0e0">&#160;com.dom.benchmarking.swingbench.kernel.SwingBenchDataSource&#160;registerWithSystemMonitor</span></div>
<div class="a t m" style="left:1164px;top:200.65px;font-size:7.2px;letter-spacing:-0.550px;line-height:8.5px;"><span style="color:#8e8e8e">[19:40:55]</span></div>
<div class="a t m" style="left:1210px;top:200.65px;font-size:7.2px;letter-spacing:-0.550px;line-height:8.5px;"><span style="color:#2e9bd6">52</span></div>
<div class="a t m" style="left:1230.0px;top:200.65px;font-size:7.2px;letter-spacing:-0.550px;line-height:8.5px;"><span style="color:#e0e0e0">SEVERE</span><span style="color:#d9c15a">:</span><span style="color:#e0e0e0">&#160;Exception&#160;Stack&#160;</span><span style="color:#d9c15a">:</span></div>
<div class="a t m" style="left:1164px;top:209.15px;font-size:7.2px;letter-spacing:-0.550px;line-height:8.5px;"><span style="color:#8e8e8e">[19:40:55]</span></div>
<div class="a t m" style="left:1210px;top:209.15px;font-size:7.2px;letter-spacing:-0.550px;line-height:8.5px;"><span style="color:#2e9bd6">53</span></div>
<div class="a t m" style="left:1230.0px;top:209.15px;font-size:7.2px;letter-spacing:-0.550px;line-height:8.5px;"><span style="color:#e0e0e0">com.jcraft.jsch.JSchException</span><span style="color:#d9c15a">:</span><span style="color:#e0e0e0">&#160;SSH_MSG_DISCONNECT</span><span style="color:#d9c15a">:</span><span style="color:#e0e0e0">&#160;</span><span style="color:#b096f5">2</span><span style="color:#e0e0e0">&#160;Too&#160;many&#160;</span><span style="color:#4a8ef0">authentication</span><span style="color:#e0e0e0">&#160;failures</span></div>
<div class="a t m" style="left:1164px;top:217.65px;font-size:7.2px;letter-spacing:-0.550px;line-height:8.5px;"><span style="color:#8e8e8e">[19:40:55]</span></div>
<div class="a t m" style="left:1210px;top:217.65px;font-size:7.2px;letter-spacing:-0.550px;line-height:8.5px;"><span style="color:#2e9bd6">54</span></div>
<div class="a t m" style="left:1230.0px;top:217.65px;font-size:7.2px;letter-spacing:-0.550px;line-height:8.5px;"><span style="color:#e0e0e0">&#160;&#160;&#160;&#160;&#160;&#160;&#160;&#160;at&#160;com.jcraft.jsch.Session.read</span><span style="color:#a4c43a">(</span><span style="color:#e0e0e0">Session.java</span><span style="color:#d9c15a">:</span><span style="color:#b096f5">996</span><span style="color:#a4c43a">)</span></div>
<div class="a t m" style="left:1164px;top:226.15px;font-size:7.2px;letter-spacing:-0.550px;line-height:8.5px;"><span style="color:#8e8e8e">[19:40:55]</span></div>
<div class="a t m" style="left:1210px;top:226.15px;font-size:7.2px;letter-spacing:-0.550px;line-height:8.5px;"><span style="color:#2e9bd6">55</span></div>
<div class="a t m" style="left:1230.0px;top:226.15px;font-size:7.2px;letter-spacing:-0.550px;line-height:8.5px;"><span style="color:#e0e0e0">&#160;&#160;&#160;&#160;&#160;&#160;&#160;&#160;at&#160;com.jcraft.jsch.UserAuthPassword.start</span><span style="color:#a4c43a">(</span><span style="color:#e0e0e0">UserAuthPassword.java</span><span style="color:#d9c15a">:</span><span style="color:#b096f5">91</span><span style="color:#a4c43a">)</span></div>
<div class="a t m" style="left:1164px;top:234.65px;font-size:7.2px;letter-spacing:-0.550px;line-height:8.5px;"><span style="color:#8e8e8e">[19:40:55]</span></div>
<div class="a t m" style="left:1210px;top:234.65px;font-size:7.2px;letter-spacing:-0.550px;line-height:8.5px;"><span style="color:#2e9bd6">56</span></div>
<div class="a t m" style="left:1230.0px;top:234.65px;font-size:7.2px;letter-spacing:-0.550px;line-height:8.5px;"><span style="color:#e0e0e0">&#160;&#160;&#160;&#160;&#160;&#160;&#160;&#160;at&#160;com.jcraft.jsch.Session.connect</span><span style="color:#a4c43a">(</span><span style="color:#e0e0e0">Session.java</span><span style="color:#d9c15a">:</span><span style="color:#b096f5">463</span><span style="color:#a4c43a">)</span></div>
<div class="a t m" style="left:1164px;top:243.15px;font-size:7.2px;letter-spacing:-0.550px;line-height:8.5px;"><span style="color:#8e8e8e">[19:40:55]</span></div>
<div class="a t m" style="left:1210px;top:243.15px;font-size:7.2px;letter-spacing:-0.550px;line-height:8.5px;"><span style="color:#2e9bd6">57</span></div>
<div class="a t m" style="left:1230.0px;top:243.15px;font-size:7.2px;letter-spacing:-0.550px;line-height:8.5px;"><span style="color:#e0e0e0">&#160;&#160;&#160;&#160;&#160;&#160;&#160;&#160;at&#160;com.jcraft.jsch.JSch.getSession</span><span style="color:#a4c43a">(</span><span style="color:#e0e0e0">JSch.java</span><span style="color:#d9c15a">:</span><span style="color:#b096f5">463</span><span style="color:#a4c43a">)</span></div>
<div class="a t m" style="left:1164px;top:251.65px;font-size:7.2px;letter-spacing:-0.550px;line-height:8.5px;"><span style="color:#8e8e8e">[19:40:55]</span></div>
<div class="a t m" style="left:1210px;top:251.65px;font-size:7.2px;letter-spacing:-0.550px;line-height:8.5px;"><span style="color:#2e9bd6">58</span></div>
<div class="a t m" style="left:1230.0px;top:251.65px;font-size:7.2px;letter-spacing:-0.550px;line-height:8.5px;"><span style="color:#e0e0e0">&#160;&#160;&#160;&#160;&#160;&#160;&#160;&#160;&#160;&#160;&#160;&#160;&#160;&#160;&#160;&#160;&#160;&#160;&#160;&#160;&#160;&#160;&#160;&#160;&#160;&#160;&#160;&#160;&#160;&#160;&#160;&#160;&#160;&#160;&#160;&#160;&#160;&#160;&#160;&#160;&#160;&#160;&#160;&#160;&#160;&#160;&#160;&#160;&#160;&#160;&#160;&#160;&#160;&#160;&#160;&#160;&#160;&#160;&#160;&#160;&#160;&#160;&#160;&#160;&#160;&#160;&#160;</span><span style="color:#e0e0e0">rverClearImpl</span><span style="color:#a4c43a">(</span><span style="color:#e0e0e0">MonitoredServerFactory.java</span><span style="color:#d9c15a">:</span><span style="color:#b096f5">48</span><span style="color:#a4c43a">)</span></div>
<div class="a t m" style="left:1164px;top:260.15px;font-size:7.2px;letter-spacing:-0.550px;line-height:8.5px;"><span style="color:#8e8e8e">[19:40:55]</span></div>
<div class="a t m" style="left:1210px;top:260.15px;font-size:7.2px;letter-spacing:-0.550px;line-height:8.5px;"><span style="color:#2e9bd6">59</span></div>
<div class="a t m" style="left:1230.0px;top:260.15px;font-size:7.2px;letter-spacing:-0.550px;line-height:8.5px;"><span style="color:#e0e0e0">&#160;&#160;&#160;&#160;&#160;&#160;&#160;&#160;&#160;&#160;&#160;&#160;&#160;&#160;&#160;&#160;&#160;&#160;&#160;&#160;&#160;&#160;&#160;&#160;&#160;&#160;&#160;&#160;&#160;&#160;&#160;&#160;&#160;&#160;&#160;&#160;&#160;&#160;&#160;&#160;&#160;&#160;&#160;&#160;&#160;&#160;&#160;&#160;&#160;&#160;&#160;&#160;&#160;&#160;&#160;&#160;&#160;&#160;&#160;&#160;&#160;&#160;&#160;&#160;&#160;&#160;&#160;</span><span style="color:#e0e0e0">rverClear</span><span style="color:#a4c43a">(</span><span style="color:#e0e0e0">MonitoredServerFactory.java</span><span style="color:#d9c15a">:</span><span style="color:#b096f5">29</span><span style="color:#a4c43a">)</span></div>
<div class="a t m" style="left:1164px;top:268.65px;font-size:7.2px;letter-spacing:-0.550px;line-height:8.5px;"><span style="color:#8e8e8e">[19:40:55]</span></div>
<div class="a t m" style="left:1210px;top:268.65px;font-size:7.2px;letter-spacing:-0.550px;line-height:8.5px;"><span style="color:#2e9bd6">60</span></div>
<div class="a t m" style="left:1230.0px;top:268.65px;font-size:7.2px;letter-spacing:-0.550px;line-height:8.5px;"><span style="color:#e0e0e0">&#160;&#160;&#160;&#160;&#160;&#160;&#160;&#160;&#160;&#160;&#160;&#160;&#160;&#160;&#160;&#160;&#160;&#160;&#160;&#160;&#160;&#160;&#160;&#160;&#160;&#160;&#160;&#160;&#160;&#160;&#160;&#160;&#160;&#160;&#160;&#160;&#160;&#160;&#160;&#160;&#160;&#160;&#160;&#160;&#160;&#160;&#160;&#160;&#160;&#160;&#160;&#160;&#160;&#160;&#160;&#160;&#160;&#160;&#160;&#160;&#160;&#160;&#160;&#160;&#160;&#160;&#160;&#160;</span><span style="color:#e0e0e0">ce.registerWithSystemMonitor</span><span style="color:#a4c43a">(</span><span style="color:#e0e0e0">SwingBenchDataSource.java</span><span style="color:#d9c15a">:</span><span style="color:#b096f5">692</span><span style="color:#a4c43a">)</span></div>
<div class="a t m" style="left:1164px;top:277.15px;font-size:7.2px;letter-spacing:-0.550px;line-height:8.5px;"><span style="color:#8e8e8e">[19:40:55]</span></div>
<div class="a t m" style="left:1210px;top:277.15px;font-size:7.2px;letter-spacing:-0.550px;line-height:8.5px;"><span style="color:#2e9bd6">61</span></div>
<div class="a t m" style="left:1230.0px;top:277.15px;font-size:7.2px;letter-spacing:-0.550px;line-height:8.5px;"><span style="color:#e0e0e0">&#160;&#160;&#160;&#160;&#160;&#160;&#160;&#160;&#160;&#160;&#160;&#160;&#160;&#160;&#160;&#160;&#160;&#160;&#160;&#160;&#160;&#160;&#160;&#160;&#160;&#160;&#160;&#160;&#160;&#160;&#160;&#160;&#160;&#160;&#160;&#160;&#160;&#160;&#160;&#160;&#160;&#160;&#160;&#160;&#160;&#160;&#160;&#160;&#160;&#160;&#160;&#160;&#160;&#160;&#160;&#160;&#160;&#160;&#160;&#160;&#160;&#160;&#160;&#160;&#160;&#160;&#160;&#160;</span><span style="color:#e0e0e0">ce.setStartedRun</span><span style="color:#a4c43a">(</span><span style="color:#e0e0e0">SwingBenchDataSource.java</span><span style="color:#d9c15a">:</span><span style="color:#b096f5">164</span><span style="color:#a4c43a">)</span></div>
<div class="a t m" style="left:1164px;top:285.65px;font-size:7.2px;letter-spacing:-0.550px;line-height:8.5px;"><span style="color:#8e8e8e">[19:40:55]</span></div>
<div class="a t m" style="left:1210px;top:285.65px;font-size:7.2px;letter-spacing:-0.550px;line-height:8.5px;"><span style="color:#2e9bd6">62</span></div>
<div class="a t m" style="left:1230.0px;top:285.65px;font-size:7.2px;letter-spacing:-0.550px;line-height:8.5px;"><span style="color:#e0e0e0">&#160;&#160;&#160;&#160;&#160;&#160;&#160;&#160;&#160;&#160;&#160;&#160;&#160;&#160;&#160;&#160;&#160;&#160;&#160;&#160;&#160;&#160;&#160;&#160;&#160;&#160;&#160;&#160;&#160;&#160;&#160;&#160;&#160;&#160;&#160;&#160;&#160;&#160;&#160;&#160;&#160;&#160;&#160;&#160;&#160;&#160;&#160;&#160;&#160;&#160;&#160;&#160;&#160;&#160;&#160;&#160;&#160;&#160;&#160;&#160;&#160;&#160;&#160;&#160;&#160;&#160;&#160;&#160;</span><span style="color:#e0e0e0">ava</span><span style="color:#d9c15a">:</span><span style="color:#b096f5">206</span><span style="color:#a4c43a">)</span></div>
<div class="a t m" style="left:1164px;top:294.15px;font-size:7.2px;letter-spacing:-0.550px;line-height:8.5px;"><span style="color:#8e8e8e">[19:40:55]</span></div>
<div class="a t m" style="left:1210px;top:294.15px;font-size:7.2px;letter-spacing:-0.550px;line-height:8.5px;"><span style="color:#2e9bd6">63</span></div>
<div class="a t m" style="left:1164px;top:302.65px;font-size:7.2px;letter-spacing:-0.550px;line-height:8.5px;"><span style="color:#8e8e8e">[19:40:55]</span></div>
<div class="a t m" style="left:1210px;top:302.65px;font-size:7.2px;letter-spacing:-0.550px;line-height:8.5px;"><span style="color:#2e9bd6">64</span></div>
<div class="a t m" style="left:1164px;top:311.15px;font-size:7.2px;letter-spacing:-0.550px;line-height:8.5px;"><span style="color:#8e8e8e">[19:40:57]</span></div>
<div class="a t m" style="left:1210px;top:311.15px;font-size:7.2px;letter-spacing:-0.550px;line-height:8.5px;"><span style="color:#2e9bd6">65</span></div>
<div class="a t m" style="left:1230.0px;top:311.15px;font-size:7.2px;letter-spacing:-0.550px;line-height:8.5px;"><span style="color:#a4c43a">07:32:01</span><span style="color:#e0e0e0">&#160;</span><span style="color:#a4c43a">[</span><span style="color:#b096f5">400</span><span style="color:#e0e0e0">/</span><span style="color:#b096f5">400</span><span style="color:#a4c43a">]</span><span style="color:#e0e0e0">&#160;&#160;&#160;</span><span style="color:#b096f5">0</span><span style="color:#e0e0e0">&#160;&#160;&#160;&#160;&#160;&#160;&#160;&#160;</span><span style="color:#b096f5">0</span><span style="color:#e0e0e0">&#160;&#160;&#160;&#160;&#160;&#160;&#160;</span><span style="color:#b096f5">0</span><span style="color:#e0e0e0">&#160;&#160;&#160;&#160;&#160;</span><span style="color:#b096f5">0</span><span style="color:#e0e0e0">&#160;&#160;&#160;&#160;&#160;</span><span style="color:#b096f5">0</span><span style="color:#e0e0e0">&#160;&#160;&#160;&#160;&#160;</span><span style="color:#b096f5">0</span><span style="color:#e0e0e0">&#160;&#160;&#160;&#160;&#160;</span><span style="color:#b096f5">0</span><span style="color:#e0e0e0">&#160;&#160;&#160;&#160;&#160;&#160;&#160;</span><span style="color:#b096f5">0</span><span style="color:#e0e0e0">&#160;&#160;&#160;&#160;&#160;&#160;&#160;</span><span style="color:#b096f5">0</span><span style="color:#e0e0e0">&#160;&#160;&#160;&#160;&#160;&#160;&#160;&#160;</span><span style="color:#b096f5">0</span></div>
<div class="a t m" style="left:1164px;top:319.65px;font-size:7.2px;letter-spacing:-0.550px;line-height:8.5px;"><span style="color:#8e8e8e">[19:40:57]</span></div>
<div class="a t m" style="left:1210px;top:319.65px;font-size:7.2px;letter-spacing:-0.550px;line-height:8.5px;"><span style="color:#2e9bd6">66</span></div>
<div class="a t m" style="left:1230.0px;top:319.65px;font-size:7.2px;letter-spacing:-0.550px;line-height:8.5px;"><span style="color:#a4c43a">07:32:02</span><span style="color:#e0e0e0">&#160;</span><span style="color:#a4c43a">[</span><span style="color:#b096f5">400</span><span style="color:#e0e0e0">/</span><span style="color:#b096f5">400</span><span style="color:#a4c43a">]</span><span style="color:#e0e0e0">&#160;&#160;&#160;</span><span style="color:#b096f5">427</span><span style="color:#e0e0e0">&#160;&#160;&#160;&#160;&#160;&#160;</span><span style="color:#b096f5">427</span><span style="color:#e0e0e0">&#160;&#160;&#160;&#160;&#160;</span><span style="color:#b096f5">0</span><span style="color:#e0e0e0">&#160;&#160;&#160;&#160;&#160;</span><span style="color:#b096f5">0</span><span style="color:#e0e0e0">&#160;&#160;&#160;&#160;&#160;</span><span style="color:#b096f5">0</span><span style="color:#e0e0e0">&#160;&#160;&#160;&#160;&#160;</span><span style="color:#b096f5">0</span><span style="color:#e0e0e0">&#160;&#160;&#160;&#160;&#160;</span><span style="color:#b096f5">0</span><span style="color:#e0e0e0">&#160;&#160;&#160;&#160;&#160;&#160;&#160;</span><span style="color:#b096f5">0</span><span style="color:#e0e0e0">&#160;&#160;&#160;&#160;&#160;&#160;&#160;</span><span style="color:#b096f5">8</span><span style="color:#e0e0e0">&#160;&#160;&#160;&#160;&#160;&#160;&#160;&#160;</span><span style="color:#b096f5">0</span></div>
<div class="a t m" style="left:1164px;top:328.15px;font-size:7.2px;letter-spacing:-0.550px;line-height:8.5px;"><span style="color:#8e8e8e">[19:40:58]</span></div>
<div class="a t m" style="left:1210px;top:328.15px;font-size:7.2px;letter-spacing:-0.550px;line-height:8.5px;"><span style="color:#2e9bd6">67</span></div>
<div class="a t m" style="left:1230.0px;top:328.15px;font-size:7.2px;letter-spacing:-0.550px;line-height:8.5px;"><span style="color:#a4c43a">07:32:03</span><span style="color:#e0e0e0">&#160;</span><span style="color:#a4c43a">[</span><span style="color:#b096f5">400</span><span style="color:#e0e0e0">/</span><span style="color:#b096f5">400</span><span style="color:#a4c43a">]</span><span style="color:#e0e0e0">&#160;&#160;&#160;</span><span style="color:#b096f5">3136</span><span style="color:#e0e0e0">&#160;&#160;&#160;&#160;&#160;</span><span style="color:#b096f5">2709</span><span style="color:#e0e0e0">&#160;&#160;&#160;&#160;</span><span style="color:#b096f5">0</span><span style="color:#e0e0e0">&#160;&#160;&#160;&#160;&#160;</span><span style="color:#b096f5">0</span><span style="color:#e0e0e0">&#160;&#160;&#160;&#160;&#160;</span><span style="color:#b096f5">0</span><span style="color:#e0e0e0">&#160;&#160;&#160;&#160;&#160;</span><span style="color:#b096f5">0</span><span style="color:#e0e0e0">&#160;&#160;&#160;&#160;&#160;</span><span style="color:#b096f5">0</span><span style="color:#e0e0e0">&#160;&#160;&#160;&#160;&#160;&#160;&#160;</span><span style="color:#b096f5">0</span><span style="color:#e0e0e0">&#160;&#160;&#160;&#160;&#160;&#160;&#160;</span><span style="color:#b096f5">6</span><span style="color:#e0e0e0">&#160;&#160;&#160;&#160;&#160;&#160;&#160;&#160;</span><span style="color:#b096f5">0</span></div>
<div class="a t m" style="left:1164px;top:336.65px;font-size:7.2px;letter-spacing:-0.550px;line-height:8.5px;"><span style="color:#8e8e8e">[19:40:59]</span></div>
<div class="a t m" style="left:1210px;top:336.65px;font-size:7.2px;letter-spacing:-0.550px;line-height:8.5px;"><span style="color:#2e9bd6">68</span></div>
<div class="a t m" style="left:1230.0px;top:336.65px;font-size:7.2px;letter-spacing:-0.550px;line-height:8.5px;"><span style="color:#a4c43a">07:32:04</span><span style="color:#e0e0e0">&#160;</span><span style="color:#a4c43a">[</span><span style="color:#b096f5">400</span><span style="color:#e0e0e0">/</span><span style="color:#b096f5">400</span><span style="color:#a4c43a">]</span><span style="color:#e0e0e0">&#160;&#160;&#160;</span><span style="color:#b096f5">5875</span><span style="color:#e0e0e0">&#160;&#160;&#160;&#160;&#160;</span><span style="color:#b096f5">2739</span><span style="color:#e0e0e0">&#160;&#160;&#160;&#160;</span><span style="color:#b096f5">0</span><span style="color:#e0e0e0">&#160;&#160;&#160;&#160;&#160;</span><span style="color:#b096f5">0</span><span style="color:#e0e0e0">&#160;&#160;&#160;&#160;&#160;</span><span style="color:#b096f5">0</span><span style="color:#e0e0e0">&#160;&#160;&#160;&#160;&#160;</span><span style="color:#b096f5">0</span><span style="color:#e0e0e0">&#160;&#160;&#160;&#160;&#160;</span><span style="color:#b096f5">0</span><span style="color:#e0e0e0">&#160;&#160;&#160;&#160;&#160;&#160;&#160;</span><span style="color:#b096f5">0</span><span style="color:#e0e0e0">&#160;&#160;&#160;&#160;&#160;&#160;&#160;</span><span style="color:#b096f5">5</span><span style="color:#e0e0e0">&#160;&#160;&#160;&#160;&#160;&#160;&#160;&#160;</span><span style="color:#b096f5">0</span></div>
<div class="a t m" style="left:1164px;top:345.15px;font-size:7.2px;letter-spacing:-0.550px;line-height:8.5px;"><span style="color:#8e8e8e">[19:41:00]</span></div>
<div class="a t m" style="left:1210px;top:345.15px;font-size:7.2px;letter-spacing:-0.550px;line-height:8.5px;"><span style="color:#2e9bd6">69</span></div>
<div class="a t m" style="left:1230.0px;top:345.15px;font-size:7.2px;letter-spacing:-0.550px;line-height:8.5px;"><span style="color:#a4c43a">07:32:05</span><span style="color:#e0e0e0">&#160;</span><span style="color:#a4c43a">[</span><span style="color:#b096f5">400</span><span style="color:#e0e0e0">/</span><span style="color:#b096f5">400</span><span style="color:#a4c43a">]</span><span style="color:#e0e0e0">&#160;&#160;&#160;</span><span style="color:#b096f5">8606</span><span style="color:#e0e0e0">&#160;&#160;&#160;&#160;&#160;</span><span style="color:#b096f5">2731</span><span style="color:#e0e0e0">&#160;&#160;&#160;&#160;</span><span style="color:#b096f5">0</span><span style="color:#e0e0e0">&#160;&#160;&#160;&#160;&#160;</span><span style="color:#b096f5">0</span><span style="color:#e0e0e0">&#160;&#160;&#160;&#160;&#160;</span><span style="color:#b096f5">0</span><span style="color:#e0e0e0">&#160;&#160;&#160;&#160;&#160;</span><span style="color:#b096f5">0</span><span style="color:#e0e0e0">&#160;&#160;&#160;&#160;&#160;</span><span style="color:#b096f5">0</span><span style="color:#e0e0e0">&#160;&#160;&#160;&#160;&#160;&#160;&#160;</span><span style="color:#b096f5">0</span><span style="color:#e0e0e0">&#160;&#160;&#160;&#160;&#160;&#160;&#160;</span><span style="color:#b096f5">5</span><span style="color:#e0e0e0">&#160;&#160;&#160;&#160;&#160;&#160;&#160;&#160;</span><span style="color:#b096f5">0</span></div>
<div class="a t m" style="left:1164px;top:353.65px;font-size:7.2px;letter-spacing:-0.550px;line-height:8.5px;"><span style="color:#8e8e8e">[19:41:01]</span></div>
<div class="a t m" style="left:1210px;top:353.65px;font-size:7.2px;letter-spacing:-0.550px;line-height:8.5px;"><span style="color:#2e9bd6">70</span></div>
<div class="a t m" style="left:1230.0px;top:353.65px;font-size:7.2px;letter-spacing:-0.550px;line-height:8.5px;"><span style="color:#a4c43a">07:32:06</span><span style="color:#e0e0e0">&#160;</span><span style="color:#a4c43a">[</span><span style="color:#b096f5">400</span><span style="color:#e0e0e0">/</span><span style="color:#b096f5">400</span><span style="color:#a4c43a">]</span><span style="color:#e0e0e0">&#160;&#160;&#160;</span><span style="color:#b096f5">11343</span><span style="color:#e0e0e0">&#160;&#160;&#160;&#160;</span><span style="color:#b096f5">2737</span><span style="color:#e0e0e0">&#160;&#160;&#160;&#160;</span><span style="color:#b096f5">0</span><span style="color:#e0e0e0">&#160;&#160;&#160;&#160;&#160;</span><span style="color:#b096f5">0</span><span style="color:#e0e0e0">&#160;&#160;&#160;&#160;&#160;</span><span style="color:#b096f5">0</span><span style="color:#e0e0e0">&#160;&#160;&#160;&#160;&#160;</span><span style="color:#b096f5">0</span><span style="color:#e0e0e0">&#160;&#160;&#160;&#160;&#160;</span><span style="color:#b096f5">0</span><span style="color:#e0e0e0">&#160;&#160;&#160;&#160;&#160;&#160;&#160;</span><span style="color:#b096f5">0</span><span style="color:#e0e0e0">&#160;&#160;&#160;&#160;&#160;&#160;&#160;</span><span style="color:#b096f5">5</span><span style="color:#e0e0e0">&#160;&#160;&#160;&#160;&#160;&#160;&#160;&#160;</span><span style="color:#b096f5">0</span></div>
<div class="a t m" style="left:1164px;top:362.15px;font-size:7.2px;letter-spacing:-0.550px;line-height:8.5px;"><span style="color:#8e8e8e">[19:41:02]</span></div>
<div class="a t m" style="left:1210px;top:362.15px;font-size:7.2px;letter-spacing:-0.550px;line-height:8.5px;"><span style="color:#2e9bd6">71</span></div>
<div class="a t m" style="left:1230.0px;top:362.15px;font-size:7.2px;letter-spacing:-0.550px;line-height:8.5px;"><span style="color:#a4c43a">07:32:07</span><span style="color:#e0e0e0">&#160;</span><span style="color:#a4c43a">[</span><span style="color:#b096f5">400</span><span style="color:#e0e0e0">/</span><span style="color:#b096f5">400</span><span style="color:#a4c43a">]</span><span style="color:#e0e0e0">&#160;&#160;&#160;</span><span style="color:#b096f5">14094</span><span style="color:#e0e0e0">&#160;&#160;&#160;&#160;</span><span style="color:#b096f5">2751</span><span style="color:#e0e0e0">&#160;&#160;&#160;&#160;</span><span style="color:#b096f5">0</span><span style="color:#e0e0e0">&#160;&#160;&#160;&#160;&#160;</span><span style="color:#b096f5">0</span><span style="color:#e0e0e0">&#160;&#160;&#160;&#160;&#160;</span><span style="color:#b096f5">0</span><span style="color:#e0e0e0">&#160;&#160;&#160;&#160;&#160;</span><span style="color:#b096f5">0</span><span style="color:#e0e0e0">&#160;&#160;&#160;&#160;&#160;</span><span style="color:#b096f5">0</span><span style="color:#e0e0e0">&#160;&#160;&#160;&#160;&#160;&#160;&#160;</span><span style="color:#b096f5">0</span><span style="color:#e0e0e0">&#160;&#160;&#160;&#160;&#160;&#160;&#160;</span><span style="color:#b096f5">4</span><span style="color:#e0e0e0">&#160;&#160;&#160;&#160;&#160;&#160;&#160;&#160;</span><span style="color:#b096f5">0</span></div>
<div class="a t m" style="left:1164px;top:370.65px;font-size:7.2px;letter-spacing:-0.550px;line-height:8.5px;"><span style="color:#8e8e8e">[19:41:03]</span></div>
<div class="a t m" style="left:1210px;top:370.65px;font-size:7.2px;letter-spacing:-0.550px;line-height:8.5px;"><span style="color:#2e9bd6">72</span></div>
<div class="a t m" style="left:1230.0px;top:370.65px;font-size:7.2px;letter-spacing:-0.550px;line-height:8.5px;"><span style="color:#a4c43a">07:32:08</span><span style="color:#e0e0e0">&#160;</span><span style="color:#a4c43a">[</span><span style="color:#b096f5">400</span><span style="color:#e0e0e0">/</span><span style="color:#b096f5">400</span><span style="color:#a4c43a">]</span><span style="color:#e0e0e0">&#160;&#160;&#160;</span><span style="color:#b096f5">16793</span><span style="color:#e0e0e0">&#160;&#160;&#160;&#160;</span><span style="color:#b096f5">2699</span><span style="color:#e0e0e0">&#160;&#160;&#160;&#160;</span><span style="color:#b096f5">0</span><span style="color:#e0e0e0">&#160;&#160;&#160;&#160;&#160;</span><span style="color:#b096f5">0</span><span style="color:#e0e0e0">&#160;&#160;&#160;&#160;&#160;</span><span style="color:#b096f5">0</span><span style="color:#e0e0e0">&#160;&#160;&#160;&#160;&#160;</span><span style="color:#b096f5">0</span><span style="color:#e0e0e0">&#160;&#160;&#160;&#160;&#160;</span><span style="color:#b096f5">0</span><span style="color:#e0e0e0">&#160;&#160;&#160;&#160;&#160;&#160;&#160;</span><span style="color:#b096f5">0</span><span style="color:#e0e0e0">&#160;&#160;&#160;&#160;&#160;&#160;&#160;</span><span style="color:#b096f5">4</span><span style="color:#e0e0e0">&#160;&#160;&#160;&#160;&#160;&#160;&#160;&#160;</span><span style="color:#b096f5">0</span></div>
<div class="a t m" style="left:1164px;top:379.15px;font-size:7.2px;letter-spacing:-0.550px;line-height:8.5px;"><span style="color:#8e8e8e">[19:41:04]</span></div>
<div class="a t m" style="left:1210px;top:379.15px;font-size:7.2px;letter-spacing:-0.550px;line-height:8.5px;"><span style="color:#2e9bd6">73</span></div>
<div class="a t m" style="left:1230.0px;top:379.15px;font-size:7.2px;letter-spacing:-0.550px;line-height:8.5px;"><span style="color:#a4c43a">07:32:09</span><span style="color:#e0e0e0">&#160;</span><span style="color:#a4c43a">[</span><span style="color:#b096f5">400</span><span style="color:#e0e0e0">/</span><span style="color:#b096f5">400</span><span style="color:#a4c43a">]</span><span style="color:#e0e0e0">&#160;&#160;&#160;</span><span style="color:#b096f5">19541</span><span style="color:#e0e0e0">&#160;&#160;&#160;&#160;</span><span style="color:#b096f5">2748</span><span style="color:#e0e0e0">&#160;&#160;&#160;&#160;</span><span style="color:#b096f5">0</span><span style="color:#e0e0e0">&#160;&#160;&#160;&#160;&#160;</span><span style="color:#b096f5">0</span><span style="color:#e0e0e0">&#160;&#160;&#160;&#160;&#160;</span><span style="color:#b096f5">0</span><span style="color:#e0e0e0">&#160;&#160;&#160;&#160;&#160;</span><span style="color:#b096f5">0</span><span style="color:#e0e0e0">&#160;&#160;&#160;&#160;&#160;</span><span style="color:#b096f5">0</span><span style="color:#e0e0e0">&#160;&#160;&#160;&#160;&#160;&#160;&#160;</span><span style="color:#b096f5">0</span><span style="color:#e0e0e0">&#160;&#160;&#160;&#160;&#160;&#160;&#160;</span><span style="color:#b096f5">4</span><span style="color:#e0e0e0">&#160;&#160;&#160;&#160;&#160;&#160;&#160;&#160;</span><span style="color:#b096f5">0</span></div>
<div class="a t m" style="left:1164px;top:387.65px;font-size:7.2px;letter-spacing:-0.550px;line-height:8.5px;"><span style="color:#8e8e8e">[19:41:05]</span></div>
<div class="a t m" style="left:1210px;top:387.65px;font-size:7.2px;letter-spacing:-0.550px;line-height:8.5px;"><span style="color:#2e9bd6">74</span></div>
<div class="a t m" style="left:1230.0px;top:387.65px;font-size:7.2px;letter-spacing:-0.550px;line-height:8.5px;"><span style="color:#a4c43a">07:32:10</span><span style="color:#e0e0e0">&#160;</span><span style="color:#a4c43a">[</span><span style="color:#b096f5">400</span><span style="color:#e0e0e0">/</span><span style="color:#b096f5">400</span><span style="color:#a4c43a">]</span><span style="color:#e0e0e0">&#160;&#160;&#160;</span><span style="color:#b096f5">22266</span><span style="color:#e0e0e0">&#160;&#160;&#160;&#160;</span><span style="color:#b096f5">2725</span><span style="color:#e0e0e0">&#160;&#160;&#160;&#160;</span><span style="color:#b096f5">0</span><span style="color:#e0e0e0">&#160;&#160;&#160;&#160;&#160;</span><span style="color:#b096f5">0</span><span style="color:#e0e0e0">&#160;&#160;&#160;&#160;&#160;</span><span style="color:#b096f5">0</span><span style="color:#e0e0e0">&#160;&#160;&#160;&#160;&#160;</span><span style="color:#b096f5">0</span><span style="color:#e0e0e0">&#160;&#160;&#160;&#160;&#160;</span><span style="color:#b096f5">0</span><span style="color:#e0e0e0">&#160;&#160;&#160;&#160;&#160;&#160;&#160;</span><span style="color:#b096f5">0</span><span style="color:#e0e0e0">&#160;&#160;&#160;&#160;&#160;&#160;&#160;</span><span style="color:#b096f5">4</span><span style="color:#e0e0e0">&#160;&#160;&#160;&#160;&#160;&#160;&#160;&#160;</span><span style="color:#b096f5">0</span></div>
<div class="a t m" style="left:1164px;top:396.15px;font-size:7.2px;letter-spacing:-0.550px;line-height:8.5px;"><span style="color:#8e8e8e">[19:41:06]</span></div>
<div class="a t m" style="left:1210px;top:396.15px;font-size:7.2px;letter-spacing:-0.550px;line-height:8.5px;"><span style="color:#2e9bd6">75</span></div>
<div class="a t m" style="left:1230.0px;top:396.15px;font-size:7.2px;letter-spacing:-0.550px;line-height:8.5px;"><span style="color:#a4c43a">07:32:11</span><span style="color:#e0e0e0">&#160;</span><span style="color:#a4c43a">[</span><span style="color:#b096f5">400</span><span style="color:#e0e0e0">/</span><span style="color:#b096f5">400</span><span style="color:#a4c43a">]</span><span style="color:#e0e0e0">&#160;&#160;&#160;</span><span style="color:#b096f5">25005</span><span style="color:#e0e0e0">&#160;&#160;&#160;&#160;</span><span style="color:#b096f5">2739</span><span style="color:#e0e0e0">&#160;&#160;&#160;&#160;</span><span style="color:#b096f5">0</span><span style="color:#e0e0e0">&#160;&#160;&#160;&#160;&#160;</span><span style="color:#b096f5">0</span><span style="color:#e0e0e0">&#160;&#160;&#160;&#160;&#160;</span><span style="color:#b096f5">0</span><span style="color:#e0e0e0">&#160;&#160;&#160;&#160;&#160;</span><span style="color:#b096f5">0</span><span style="color:#e0e0e0">&#160;&#160;&#160;&#160;&#160;</span><span style="color:#b096f5">0</span><span style="color:#e0e0e0">&#160;&#160;&#160;&#160;&#160;&#160;&#160;</span><span style="color:#b096f5">0</span><span style="color:#e0e0e0">&#160;&#160;&#160;&#160;&#160;&#160;&#160;</span><span style="color:#b096f5">4</span><span style="color:#e0e0e0">&#160;&#160;&#160;&#160;&#160;&#160;&#160;&#160;</span><span style="color:#b096f5">0</span></div>
<div class="a t m" style="left:1164px;top:404.65px;font-size:7.2px;letter-spacing:-0.550px;line-height:8.5px;"><span style="color:#8e8e8e">[19:41:07]</span></div>
<div class="a t m" style="left:1210px;top:404.65px;font-size:7.2px;letter-spacing:-0.550px;line-height:8.5px;"><span style="color:#2e9bd6">76</span></div>
<div class="a t m" style="left:1230.0px;top:404.65px;font-size:7.2px;letter-spacing:-0.550px;line-height:8.5px;"><span style="color:#a4c43a">07:32:12</span><span style="color:#e0e0e0">&#160;</span><span style="color:#a4c43a">[</span><span style="color:#b096f5">400</span><span style="color:#e0e0e0">/</span><span style="color:#b096f5">400</span><span style="color:#a4c43a">]</span><span style="color:#e0e0e0">&#160;&#160;&#160;</span><span style="color:#b096f5">27721</span><span style="color:#e0e0e0">&#160;&#160;&#160;&#160;</span><span style="color:#b096f5">2716</span><span style="color:#e0e0e0">&#160;&#160;&#160;&#160;</span><span style="color:#b096f5">0</span><span style="color:#e0e0e0">&#160;&#160;&#160;&#160;&#160;</span><span style="color:#b096f5">0</span><span style="color:#e0e0e0">&#160;&#160;&#160;&#160;&#160;</span><span style="color:#b096f5">0</span><span style="color:#e0e0e0">&#160;&#160;&#160;&#160;&#160;</span><span style="color:#b096f5">0</span><span style="color:#e0e0e0">&#160;&#160;&#160;&#160;&#160;</span><span style="color:#b096f5">0</span><span style="color:#e0e0e0">&#160;&#160;&#160;&#160;&#160;&#160;&#160;</span><span style="color:#b096f5">0</span><span style="color:#e0e0e0">&#160;&#160;&#160;&#160;&#160;&#160;&#160;</span><span style="color:#b096f5">4</span><span style="color:#e0e0e0">&#160;&#160;&#160;&#160;&#160;&#160;&#160;&#160;</span><span style="color:#b096f5">0</span></div>
<div class="a t m" style="left:1164px;top:413.15px;font-size:7.2px;letter-spacing:-0.550px;line-height:8.5px;"><span style="color:#8e8e8e">[19:41:08]</span></div>
<div class="a t m" style="left:1210px;top:413.15px;font-size:7.2px;letter-spacing:-0.550px;line-height:8.5px;"><span style="color:#2e9bd6">77</span></div>
<div class="a t m" style="left:1230.0px;top:413.15px;font-size:7.2px;letter-spacing:-0.550px;line-height:8.5px;"><span style="color:#a4c43a">07:32:13</span><span style="color:#e0e0e0">&#160;</span><span style="color:#a4c43a">[</span><span style="color:#b096f5">400</span><span style="color:#e0e0e0">/</span><span style="color:#b096f5">400</span><span style="color:#a4c43a">]</span><span style="color:#e0e0e0">&#160;&#160;&#160;</span><span style="color:#b096f5">30410</span><span style="color:#e0e0e0">&#160;&#160;&#160;&#160;</span><span style="color:#b096f5">2689</span><span style="color:#e0e0e0">&#160;&#160;&#160;&#160;</span><span style="color:#b096f5">0</span><span style="color:#e0e0e0">&#160;&#160;&#160;&#160;&#160;</span><span style="color:#b096f5">0</span><span style="color:#e0e0e0">&#160;&#160;&#160;&#160;&#160;</span><span style="color:#b096f5">0</span><span style="color:#e0e0e0">&#160;&#160;&#160;&#160;&#160;</span><span style="color:#b096f5">0</span><span style="color:#e0e0e0">&#160;&#160;&#160;&#160;&#160;</span><span style="color:#b096f5">0</span><span style="color:#e0e0e0">&#160;&#160;&#160;&#160;&#160;&#160;&#160;</span><span style="color:#b096f5">0</span><span style="color:#e0e0e0">&#160;&#160;&#160;&#160;&#160;&#160;&#160;</span><span style="color:#b096f5">4</span><span style="color:#e0e0e0">&#160;&#160;&#160;&#160;&#160;&#160;&#160;&#160;</span><span style="color:#b096f5">0</span></div>
<div class="a t m" style="left:1164px;top:421.65px;font-size:7.2px;letter-spacing:-0.550px;line-height:8.5px;"><span style="color:#f03e6a">[19:41:08]</span></div>
<div class="a t m" style="left:1210px;top:421.65px;font-size:7.2px;letter-spacing:-0.550px;line-height:8.5px;"><span style="color:#f03e6a">78</span></div>
<div class="a" style="left:1219px;top:124.3px;width:6.5px;height:6.5px;border:1px solid #2e9bd6;border-radius:1px"></div>
<div class="a" style="left:1220.5px;top:127px;width:3.5px;height:1px;background:#2e9bd6"></div>
<div class="a" style="left:1221.8px;top:131px;width:1px;height:293px;background:#2e9bd6;opacity:.85"></div>
<div class="a" style="left:1221.8px;top:424px;width:4px;height:1px;background:#2e9bd6;opacity:.85"></div>
<div class="a" style="left:1230px;top:420.5px;width:3.6px;height:8.5px;background:#f0a020"></div>
<div class="a" style="left:1237px;top:240px;width:247px;height:247px;overflow:hidden;background:#1e1e1e">
<div class="a" style="left:-1237px;top:-240px;width:2000px;height:665px">
<div class="a" style="left:1200px;top:449.1351000000001px;width:300px;height:12.699px;background:#2a2a2a"></div>
<div class="a t m" style="left:1210.59px;top:245.95px;font-size:10.757px;letter-spacing:-0.822px;line-height:12.70px;font-weight:700"><span style="color:#e6e6e6">at&#160;com.dom.benchmarking.swingbench.CharBench.run</span><span style="color:#a4c43a">(</span><span style="color:#e6e6e6">CharBench.java</span><span style="color:#d9c15a">:</span><span style="color:#b59cf8">206</span><span style="color:#a4c43a">)</span></div>
<div class="a t m" style="left:1210.59px;top:258.65px;font-size:10.757px;letter-spacing:-0.822px;line-height:12.70px;font-weight:700"><span style="color:#e6e6e6">at&#160;java.lang.Thread.run</span><span style="color:#a4c43a">(</span><span style="color:#e6e6e6">Thread.java</span><span style="color:#d9c15a">:</span><span style="color:#b59cf8">750</span><span style="color:#a4c43a">)</span></div>
<div class="a t m" style="left:1216.22px;top:284.05px;font-size:10.757px;letter-spacing:-0.822px;line-height:12.70px;font-weight:700"><span style="color:#a4c43a">[</span><span style="color:#b59cf8">400</span><span style="color:#e6e6e6">/</span><span style="color:#b59cf8">400</span><span style="color:#a4c43a">]</span><span style="color:#e6e6e6">&#160;&#160;&#160;</span><span style="color:#b59cf8">0</span><span style="color:#e6e6e6">&#160;&#160;&#160;&#160;&#160;&#160;&#160;&#160;</span><span style="color:#b59cf8">0</span><span style="color:#e6e6e6">&#160;&#160;&#160;&#160;&#160;&#160;&#160;</span><span style="color:#b59cf8">0</span><span style="color:#e6e6e6">&#160;&#160;&#160;&#160;&#160;</span><span style="color:#b59cf8">0</span><span style="color:#e6e6e6">&#160;&#160;&#160;&#160;&#160;</span><span style="color:#b59cf8">0</span><span style="color:#e6e6e6">&#160;&#160;&#160;&#160;&#160;</span><span style="color:#b59cf8">0</span></div>
<div class="a t m" style="left:1216.22px;top:296.75px;font-size:10.757px;letter-spacing:-0.822px;line-height:12.70px;font-weight:700"><span style="color:#a4c43a">[</span><span style="color:#b59cf8">400</span><span style="color:#e6e6e6">/</span><span style="color:#b59cf8">400</span><span style="color:#a4c43a">]</span><span style="color:#e6e6e6">&#160;&#160;&#160;</span><span style="color:#b59cf8">427</span><span style="color:#e6e6e6">&#160;&#160;&#160;&#160;&#160;&#160;</span><span style="color:#b59cf8">427</span><span style="color:#e6e6e6">&#160;&#160;&#160;&#160;&#160;</span><span style="color:#b59cf8">0</span><span style="color:#e6e6e6">&#160;&#160;&#160;&#160;&#160;</span><span style="color:#b59cf8">0</span><span style="color:#e6e6e6">&#160;&#160;&#160;&#160;&#160;</span><span style="color:#b59cf8">0</span><span style="color:#e6e6e6">&#160;&#160;&#160;&#160;&#160;</span><span style="color:#b59cf8">0</span></div>
<div class="a t m" style="left:1216.22px;top:309.45px;font-size:10.757px;letter-spacing:-0.822px;line-height:12.70px;font-weight:700"><span style="color:#a4c43a">[</span><span style="color:#b59cf8">400</span><span style="color:#e6e6e6">/</span><span style="color:#b59cf8">400</span><span style="color:#a4c43a">]</span><span style="color:#e6e6e6">&#160;&#160;&#160;</span><span style="color:#b59cf8">3136</span><span style="color:#e6e6e6">&#160;&#160;&#160;&#160;&#160;</span><span style="color:#b59cf8">2709</span><span style="color:#e6e6e6">&#160;&#160;&#160;&#160;</span><span style="color:#b59cf8">0</span><span style="color:#e6e6e6">&#160;&#160;&#160;&#160;&#160;</span><span style="color:#b59cf8">0</span><span style="color:#e6e6e6">&#160;&#160;&#160;&#160;&#160;</span><span style="color:#b59cf8">0</span><span style="color:#e6e6e6">&#160;&#160;&#160;&#160;&#160;</span><span style="color:#b59cf8">0</span></div>
<div class="a t m" style="left:1216.22px;top:322.15px;font-size:10.757px;letter-spacing:-0.822px;line-height:12.70px;font-weight:700"><span style="color:#a4c43a">[</span><span style="color:#b59cf8">400</span><span style="color:#e6e6e6">/</span><span style="color:#b59cf8">400</span><span style="color:#a4c43a">]</span><span style="color:#e6e6e6">&#160;&#160;&#160;</span><span style="color:#b59cf8">5875</span><span style="color:#e6e6e6">&#160;&#160;&#160;&#160;&#160;</span><span style="color:#b59cf8">2739</span><span style="color:#e6e6e6">&#160;&#160;&#160;&#160;</span><span style="color:#b59cf8">0</span><span style="color:#e6e6e6">&#160;&#160;&#160;&#160;&#160;</span><span style="color:#b59cf8">0</span><span style="color:#e6e6e6">&#160;&#160;&#160;&#160;&#160;</span><span style="color:#b59cf8">0</span><span style="color:#e6e6e6">&#160;&#160;&#160;&#160;&#160;</span><span style="color:#b59cf8">0</span></div>
<div class="a t m" style="left:1216.22px;top:334.84px;font-size:10.757px;letter-spacing:-0.822px;line-height:12.70px;font-weight:700"><span style="color:#a4c43a">[</span><span style="color:#b59cf8">400</span><span style="color:#e6e6e6">/</span><span style="color:#b59cf8">400</span><span style="color:#a4c43a">]</span><span style="color:#e6e6e6">&#160;&#160;&#160;</span><span style="color:#b59cf8">8606</span><span style="color:#e6e6e6">&#160;&#160;&#160;&#160;&#160;</span><span style="color:#b59cf8">2731</span><span style="color:#e6e6e6">&#160;&#160;&#160;&#160;</span><span style="color:#b59cf8">0</span><span style="color:#e6e6e6">&#160;&#160;&#160;&#160;&#160;</span><span style="color:#b59cf8">0</span><span style="color:#e6e6e6">&#160;&#160;&#160;&#160;&#160;</span><span style="color:#b59cf8">0</span><span style="color:#e6e6e6">&#160;&#160;&#160;&#160;&#160;</span><span style="color:#b59cf8">0</span></div>
<div class="a t m" style="left:1216.22px;top:347.54px;font-size:10.757px;letter-spacing:-0.822px;line-height:12.70px;font-weight:700"><span style="color:#a4c43a">[</span><span style="color:#b59cf8">400</span><span style="color:#e6e6e6">/</span><span style="color:#b59cf8">400</span><span style="color:#a4c43a">]</span><span style="color:#e6e6e6">&#160;&#160;&#160;</span><span style="color:#b59cf8">11343</span><span style="color:#e6e6e6">&#160;&#160;&#160;&#160;</span><span style="color:#b59cf8">2737</span><span style="color:#e6e6e6">&#160;&#160;&#160;&#160;</span><span style="color:#b59cf8">0</span><span style="color:#e6e6e6">&#160;&#160;&#160;&#160;&#160;</span><span style="color:#b59cf8">0</span><span style="color:#e6e6e6">&#160;&#160;&#160;&#160;&#160;</span><span style="color:#b59cf8">0</span><span style="color:#e6e6e6">&#160;&#160;&#160;&#160;&#160;</span><span style="color:#b59cf8">0</span></div>
<div class="a t m" style="left:1216.22px;top:360.24px;font-size:10.757px;letter-spacing:-0.822px;line-height:12.70px;font-weight:700"><span style="color:#a4c43a">[</span><span style="color:#b59cf8">400</span><span style="color:#e6e6e6">/</span><span style="color:#b59cf8">400</span><span style="color:#a4c43a">]</span><span style="color:#e6e6e6">&#160;&#160;&#160;</span><span style="color:#b59cf8">14094</span><span style="color:#e6e6e6">&#160;&#160;&#160;&#160;</span><span style="color:#b59cf8">2751</span><span style="color:#e6e6e6">&#160;&#160;&#160;&#160;</span><span style="color:#b59cf8">0</span><span style="color:#e6e6e6">&#160;&#160;&#160;&#160;&#160;</span><span style="color:#b59cf8">0</span><span style="color:#e6e6e6">&#160;&#160;&#160;&#160;&#160;</span><span style="color:#b59cf8">0</span><span style="color:#e6e6e6">&#160;&#160;&#160;&#160;&#160;</span><span style="color:#b59cf8">0</span></div>
<div class="a t m" style="left:1216.22px;top:372.94px;font-size:10.757px;letter-spacing:-0.822px;line-height:12.70px;font-weight:700"><span style="color:#a4c43a">[</span><span style="color:#b59cf8">400</span><span style="color:#e6e6e6">/</span><span style="color:#b59cf8">400</span><span style="color:#a4c43a">]</span><span style="color:#e6e6e6">&#160;&#160;&#160;</span><span style="color:#b59cf8">16793</span><span style="color:#e6e6e6">&#160;&#160;&#160;&#160;</span><span style="color:#b59cf8">2699</span><span style="color:#e6e6e6">&#160;&#160;&#160;&#160;</span><span style="color:#b59cf8">0</span><span style="color:#e6e6e6">&#160;&#160;&#160;&#160;&#160;</span><span style="color:#b59cf8">0</span><span style="color:#e6e6e6">&#160;&#160;&#160;&#160;&#160;</span><span style="color:#b59cf8">0</span><span style="color:#e6e6e6">&#160;&#160;&#160;&#160;&#160;</span><span style="color:#b59cf8">0</span></div>
<div class="a t m" style="left:1216.22px;top:385.64px;font-size:10.757px;letter-spacing:-0.822px;line-height:12.70px;font-weight:700"><span style="color:#a4c43a">[</span><span style="color:#b59cf8">400</span><span style="color:#e6e6e6">/</span><span style="color:#b59cf8">400</span><span style="color:#a4c43a">]</span><span style="color:#e6e6e6">&#160;&#160;&#160;</span><span style="color:#b59cf8">19541</span><span style="color:#e6e6e6">&#160;&#160;&#160;&#160;</span><span style="color:#b59cf8">2748</span><span style="color:#e6e6e6">&#160;&#160;&#160;&#160;</span><span style="color:#b59cf8">0</span><span style="color:#e6e6e6">&#160;&#160;&#160;&#160;&#160;</span><span style="color:#b59cf8">0</span><span style="color:#e6e6e6">&#160;&#160;&#160;&#160;&#160;</span><span style="color:#b59cf8">0</span><span style="color:#e6e6e6">&#160;&#160;&#160;&#160;&#160;</span><span style="color:#b59cf8">0</span></div>
<div class="a t m" style="left:1216.22px;top:398.34px;font-size:10.757px;letter-spacing:-0.822px;line-height:12.70px;font-weight:700"><span style="color:#a4c43a">[</span><span style="color:#b59cf8">400</span><span style="color:#e6e6e6">/</span><span style="color:#b59cf8">400</span><span style="color:#a4c43a">]</span><span style="color:#e6e6e6">&#160;&#160;&#160;</span><span style="color:#b59cf8">22266</span><span style="color:#e6e6e6">&#160;&#160;&#160;&#160;</span><span style="color:#b59cf8">2725</span><span style="color:#e6e6e6">&#160;&#160;&#160;&#160;</span><span style="color:#b59cf8">0</span><span style="color:#e6e6e6">&#160;&#160;&#160;&#160;&#160;</span><span style="color:#b59cf8">0</span><span style="color:#e6e6e6">&#160;&#160;&#160;&#160;&#160;</span><span style="color:#b59cf8">0</span><span style="color:#e6e6e6">&#160;&#160;&#160;&#160;&#160;</span><span style="color:#b59cf8">0</span></div>
<div class="a t m" style="left:1216.22px;top:411.04px;font-size:10.757px;letter-spacing:-0.822px;line-height:12.70px;font-weight:700"><span style="color:#a4c43a">[</span><span style="color:#b59cf8">400</span><span style="color:#e6e6e6">/</span><span style="color:#b59cf8">400</span><span style="color:#a4c43a">]</span><span style="color:#e6e6e6">&#160;&#160;&#160;</span><span style="color:#b59cf8">25005</span><span style="color:#e6e6e6">&#160;&#160;&#160;&#160;</span><span style="color:#b59cf8">2739</span><span style="color:#e6e6e6">&#160;&#160;&#160;&#160;</span><span style="color:#b59cf8">0</span><span style="color:#e6e6e6">&#160;&#160;&#160;&#160;&#160;</span><span style="color:#b59cf8">0</span><span style="color:#e6e6e6">&#160;&#160;&#160;&#160;&#160;</span><span style="color:#b59cf8">0</span><span style="color:#e6e6e6">&#160;&#160;&#160;&#160;&#160;</span><span style="color:#b59cf8">0</span></div>
<div class="a t m" style="left:1216.22px;top:423.74px;font-size:10.757px;letter-spacing:-0.822px;line-height:12.70px;font-weight:700"><span style="color:#a4c43a">[</span><span style="color:#b59cf8">400</span><span style="color:#e6e6e6">/</span><span style="color:#b59cf8">400</span><span style="color:#a4c43a">]</span><span style="color:#e6e6e6">&#160;&#160;&#160;</span><span style="color:#b59cf8">27721</span><span style="color:#e6e6e6">&#160;&#160;&#160;&#160;</span><span style="color:#b59cf8">2716</span><span style="color:#e6e6e6">&#160;&#160;&#160;&#160;</span><span style="color:#b59cf8">0</span><span style="color:#e6e6e6">&#160;&#160;&#160;&#160;&#160;</span><span style="color:#b59cf8">0</span><span style="color:#e6e6e6">&#160;&#160;&#160;&#160;&#160;</span><span style="color:#b59cf8">0</span><span style="color:#e6e6e6">&#160;&#160;&#160;&#160;&#160;</span><span style="color:#b59cf8">0</span></div>
<div class="a t m" style="left:1216.22px;top:436.44px;font-size:10.757px;letter-spacing:-0.822px;line-height:12.70px;font-weight:700"><span style="color:#a4c43a">[</span><span style="color:#b59cf8">400</span><span style="color:#e6e6e6">/</span><span style="color:#b59cf8">400</span><span style="color:#a4c43a">]</span><span style="color:#e6e6e6">&#160;&#160;&#160;</span><span style="color:#b59cf8">30410</span><span style="color:#e6e6e6">&#160;&#160;&#160;&#160;</span><span style="color:#b59cf8">2689</span><span style="color:#e6e6e6">&#160;&#160;&#160;&#160;</span><span style="color:#b59cf8">0</span><span style="color:#e6e6e6">&#160;&#160;&#160;&#160;&#160;</span><span style="color:#b59cf8">0</span><span style="color:#e6e6e6">&#160;&#160;&#160;&#160;&#160;</span><span style="color:#b59cf8">0</span><span style="color:#e6e6e6">&#160;&#160;&#160;&#160;&#160;</span><span style="color:#b59cf8">0</span></div>
</div></div>
<div class="a" style="left:1236px;top:239px;width:249px;height:249px;border:2px solid #fff;box-shadow:0 0 0 1px rgba(0,0,0,.5)"></div>
<div class="a" style="left:1351.5px;top:231.0px;width:18px;height:18px;border-radius:50%;background:#fff;box-shadow:0 0 2px rgba(0,0,0,.6)"></div>
<div class="a" style="left:1351.5px;top:479.0px;width:18px;height:18px;border-radius:50%;background:#fff;box-shadow:0 0 2px rgba(0,0,0,.6)"></div>
<div class="a" style="left:1228.0px;top:354.5px;width:18px;height:18px;border-radius:50%;background:#fff;box-shadow:0 0 2px rgba(0,0,0,.6)"></div>
<div class="a" style="left:1475.5px;top:354.5px;width:18px;height:18px;border-radius:50%;background:#fff;box-shadow:0 0 2px rgba(0,0,0,.6)"></div>
<div class="a t" style="left:1500px;top:354.4px;width:240px;text-align:center;font-size:22.5px;line-height:24px;color:#fff;-webkit-text-stroke:0.35px #fff;text-shadow:0 0 3px rgba(0,0,0,.8),0 0 1px #000">不开内存分层，数据<br>库TPM 2700+</div>
</div></div>
</body></html>
